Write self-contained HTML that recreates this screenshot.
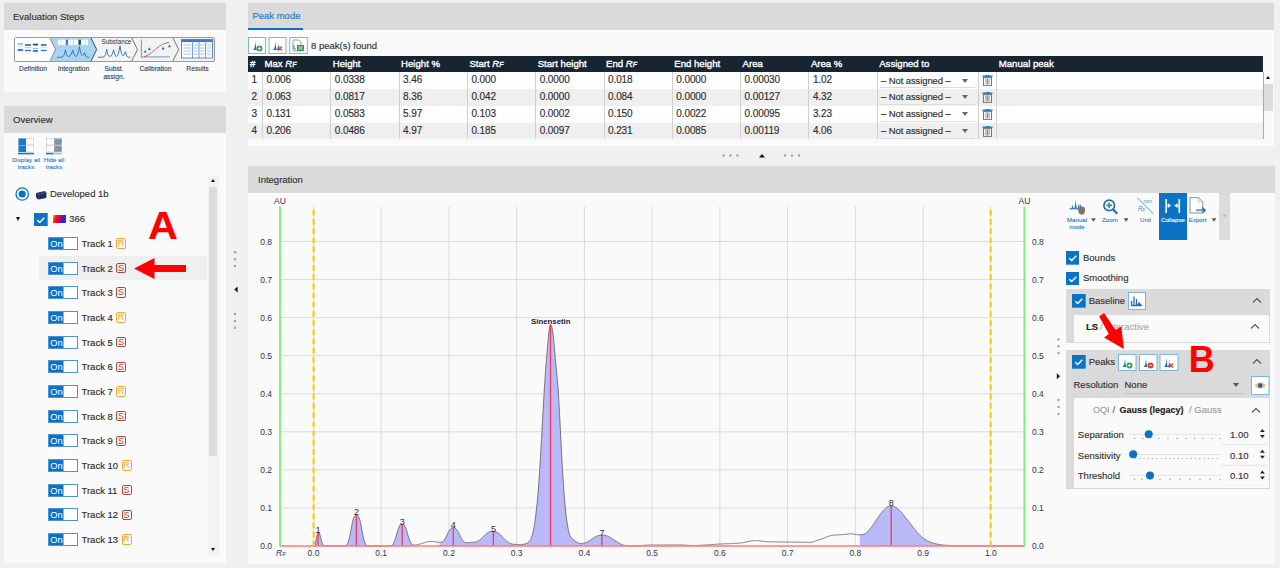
<!DOCTYPE html>
<html><head><meta charset="utf-8">
<style>
html,body{margin:0;padding:0}
body{width:1280px;height:568px;overflow:hidden;background:#f0f0f0;position:relative;font-family:"Liberation Sans",sans-serif;color:#333;-webkit-text-stroke:0.15px currentColor}
.a{position:absolute}
.panel{position:absolute;background:#fafafa}
.hdr{position:absolute;left:0;top:0;right:0;height:27px;background:#dadada}
.htxt{position:absolute;font-size:9.5px;line-height:12px;color:#333}
.t95{font-size:9.5px;white-space:nowrap}
.badge{position:absolute;width:8px;height:8.5px;border:1px solid;border-radius:2px;font-size:9px;line-height:9px;text-align:center;background:transparent;-webkit-text-stroke:0}
.th{font-size:9.6px;font-weight:normal;color:#fff;line-height:12px;white-space:nowrap;-webkit-text-stroke:0.35px #fff}
.td{font-size:10px;letter-spacing:-0.1px;color:#2e2e2e;line-height:12px;white-space:nowrap}
.lbl{font-size:6.7px;color:#3a4a60;white-space:nowrap;text-align:center;line-height:8.3px}
.tb{font-size:6.2px;color:#1c7acb;white-space:nowrap;text-align:center;line-height:7px;-webkit-text-stroke:0.1px currentColor}
svg text.ax{font-family:"Liberation Sans",sans-serif;font-size:8.5px;fill:#2e3452}
svg text.pl{font-family:"Liberation Sans",sans-serif;font-size:9px;fill:#2a2a3a}
</style></head><body>

<!-- ============ LEFT: Evaluation Steps ============ -->
<div class="panel" style="left:4px;top:3px;width:222px;height:88.5px">
  <div class="hdr"></div>
  <div class="htxt" style="left:9px;top:7.5px">Evaluation Steps</div>
</div>
<svg class="a" style="left:0;top:0" width="230" height="92" viewBox="0 0 230 92">
  <!-- outer -->
  <rect x="14.5" y="37.5" width="200" height="24" fill="#f3f3f3" stroke="#9a9a9a" stroke-width="1.1" rx="2"/>
  <path d="M15 38 H50 L55.5 49.5 L50 61 H15 Z" fill="#fff"/>
  <path d="M50 38 H91 L96.7 49.5 L91 61 H50 L55.5 49.5 Z" fill="#a9d3ef"/>
  <path d="M50 38 L55.5 49.5 L50 61" fill="none" stroke="#8c8c8c" stroke-width="1"/>
  <path d="M91 38 L96.7 49.5 L91 61" fill="none" stroke="#2d4e8e" stroke-width="1"/>
  <path d="M131.7 38 L137.5 49.5 L131.7 61" fill="none" stroke="#666" stroke-width="0.9"/>
  <path d="M172.9 38 L178.7 49.5 L172.9 61" fill="none" stroke="#666" stroke-width="0.9"/>
  <!-- definition icon -->
  <g>
    <path d="M17.7 43.9 H23.1" stroke="#7aa8b8" stroke-width="1.4"/>
    <path d="M25 45 H30.8 M40.9 45 H46.5" stroke="#1e5e80" stroke-width="1.3"/>
    <path d="M32.9 44.6 H38" stroke="#0d4a70" stroke-width="1.7"/>
    <path d="M17.7 46.4 H23.1 M40.9 47.4 H46.5" stroke="#a8c8f0" stroke-width="0.6"/>
    <path d="M25 47.4 H30.8" stroke="#999" stroke-width="0.6"/>
    <path d="M32.9 48.4 H38" stroke="#8ab8f8" stroke-width="1.2"/>
    <path d="M17.7 50.1 H23.1 M32.9 51 H38" stroke="#2f80f0" stroke-width="2"/>
    <path d="M25 50.5 H30.8 M40.9 50.5 H46.5" stroke="#2f80f0" stroke-width="1.3"/>
    <path d="M17.7 53.5 H23.1 M25 53.5 H30.8 M32.9 53.5 H38 M40.9 53.5 H46.5" stroke="#e6efe6" stroke-width="0.6"/>
  </g>
  <!-- integration icon -->
  <g>
    <rect x="58" y="39.7" width="30" height="5.2" fill="#fff"/>
    <rect x="60.3" y="39.7" width="2" height="5.2" fill="#e4eeee"/>
    <rect x="65.7" y="39.7" width="2.4" height="5.2" fill="#2a7ff0"/>
    <rect x="73.2" y="39.7" width="0.8" height="5.2" fill="#a8c8f0"/>
    <rect x="78.5" y="39.7" width="2.4" height="5.2" fill="#0d4a70"/>
    <rect x="84" y="39.7" width="2" height="5.2" fill="#e4eeee"/>
    <path d="M57 57.3 H61.5 Q64.2 57.3 65.4 49.8 Q66.5 56.5 68.5 56.5 Q71 56.5 72.8 50.1 Q74.2 56.5 76 56.5 Q78 56 79.5 46.4 Q80.8 55.5 82.5 55.5 Q83.7 55.5 84.6 52.5 Q85.5 57.3 87.5 57.3 H89.3" fill="none" stroke="#2a6db5" stroke-width="0.9"/>
  </g>
  <!-- substance -->
  <text x="101.6" y="43.9" font-family="Liberation Sans" font-size="6.3" fill="#333">Substance</text>
  <path d="M97.9 57.2 H103 Q105.5 57.2 106.7 49.3 Q107.8 56.5 109.8 56.5 Q112 56.5 113.6 49.8 Q114.8 56.5 116.5 56.5 Q118.5 56 120 45.8 Q121.3 55.5 123 55.5 Q124.5 55.5 125.4 51.7 Q126.3 57.2 128.5 57.2 H130.4" fill="none" stroke="#2a6db5" stroke-width="0.9"/>
  <!-- calibration -->
  <path d="M141.4 39.4 V57.7 M141 56.9 H169.9" stroke="#5a8fc8" stroke-width="0.9" fill="none"/>
  <path d="M144 57 Q150 55 156.6 48.3 Q162 43 169 42.3" stroke="#c8452e" stroke-width="0.8" fill="none"/>
  <path d="M143.6 52.6 l1.6 -2.6 l1.6 2.6 Z M147.8 49.9 l1.6 -2.6 l1.6 2.6 Z M161.6 49.4 l1.6 -2.6 l1.6 2.6 Z M167.8 47.2 l1.6 -2.6 l1.6 2.6 Z" fill="#2a6db5"/>
  <!-- results -->
  <rect x="181.5" y="39.5" width="31" height="18.5" fill="#fff" stroke="#4a86c8" stroke-width="0.9"/>
  <rect x="181.5" y="39.5" width="31" height="2.6" fill="#3a7cc8"/>
  <path d="M192.5 39.5 V58 M199 39.5 V58 M205.5 39.5 V58" stroke="#4a86c8" stroke-width="0.8"/>
  <path d="M183.5 45 H191 M183.5 48 H191 M183.5 51 H191 M183.5 54 H191 M193.5 45 H198 M193.5 48 H198 M193.5 51 H198 M193.5 54 H198 M200 45 H204.5 M200 48 H204.5 M200 51 H204.5 M200 54 H204.5 M206.5 45 H211 M206.5 48 H211 M206.5 51 H211 M206.5 54 H211" stroke="#7aa6d8" stroke-width="0.7"/>
</svg>
<div class="a lbl" style="left:13px;top:65px;width:40px">Definition</div>
<div class="a lbl" style="left:53px;top:65px;width:41px">Integration</div>
<div class="a lbl" style="left:94px;top:65px;width:40px">Subst.<br>assign.</div>
<div class="a lbl" style="left:135px;top:65px;width:41px">Calibration</div>
<div class="a lbl" style="left:177px;top:65px;width:41px">Results</div>

<!-- ============ LEFT: Overview ============ -->
<div class="panel" style="left:4px;top:105.5px;width:222px;height:457.5px">
  <div class="hdr"></div>
  <div class="htxt" style="left:9px;top:8px">Overview</div>
</div>
<svg class="a" style="left:18px;top:138px" width="16" height="17" viewBox="0 0 16 17">
  <rect x="0.5" y="0.5" width="15" height="6.5" fill="#fff" stroke="#ccc" stroke-width="0.7"/>
  <rect x="0.5" y="0.5" width="7.5" height="6.5" fill="#1b7acb"/>
  <rect x="0.5" y="7.5" width="15" height="6.5" fill="#fff" stroke="#ccc" stroke-width="0.7"/>
  <rect x="0.5" y="7.5" width="7.5" height="6.5" fill="#1b7acb"/>
  <rect x="0" y="14.8" width="16" height="1.6" fill="#1b7acb"/>
</svg>
<svg class="a" style="left:46px;top:138px" width="16" height="17" viewBox="0 0 16 17">
  <rect x="0.5" y="0.5" width="15" height="6.5" fill="#fff" stroke="#ccc" stroke-width="0.7"/>
  <rect x="8" y="0.5" width="7.5" height="6.5" fill="#9aa0a6"/>
  <rect x="0.5" y="7.5" width="15" height="6.5" fill="#fff" stroke="#ccc" stroke-width="0.7"/>
  <rect x="8" y="7.5" width="7.5" height="6.5" fill="#9aa0a6"/>
  <text x="9" y="6" font-family="Liberation Sans" font-size="5" fill="#2a7acb">Off</text>
  <text x="9" y="13" font-family="Liberation Sans" font-size="5" fill="#2a7acb">Off</text>
  <rect x="0" y="14.8" width="7" height="1.6" fill="#1b7acb"/>
  <rect x="7" y="14.8" width="9" height="1.6" fill="#bbb"/>
</svg>
<div class="a tb" style="left:6px;top:156px;width:40px">Display all<br>tracks</div>
<div class="a tb" style="left:34px;top:156px;width:40px">Hide all<br>tracks</div>

<!-- tree -->
<svg class="a" style="left:15px;top:187px" width="15" height="15" viewBox="0 0 15 15"><circle cx="7.2" cy="7" r="6.2" fill="#fff" stroke="#0b73c6" stroke-width="1.3"/><circle cx="7.2" cy="7" r="3.6" fill="#0b73c6"/></svg>
<svg class="a" style="left:34.5px;top:189.5px" width="12" height="10" viewBox="0 0 12 10"><path d="M1 3 L9.5 1 L11.5 2.5 L3 4.5 Z" fill="#2a3a5a"/><path d="M3 4.5 L11.5 2.5 L11.3 8 L3.5 9.5 Z" fill="#1a2c70"/><path d="M1 3 L3 4.5 L3.5 9.5 L1.3 8 Z" fill="#101828"/></svg>
<div class="a t95" style="left:50px;top:188px;line-height:12px;color:#333">Developed 1b</div>
<div class="a" style="left:15.5px;top:217px;width:0;height:0;border-left:2.6px solid transparent;border-right:2.6px solid transparent;border-top:4px solid #111"></div>
<div class="a" style="left:34px;top:212.5px"><svg style="display:block" width="13.7" height="13.7" viewBox="0 0 13 13"><rect width="13" height="13" fill="#0b73c6"/><path d="M3.2 6.8 L5.4 9 L9.8 4.6" stroke="#fff" stroke-width="1.4" fill="none"/></svg></div>
<div class="a" style="left:52.5px;top:215.2px;width:13.5px;height:7.5px;background:linear-gradient(110deg,#f6d000 0%,#ff2000 22%,#e00040 45%,#3018f0 75%,#1838e0 90%,#18a050 100%)"></div>
<div class="a t95" style="left:69.3px;top:213px;line-height:12px;color:#333">366</div>

<div class="a" style="left:39px;top:255.8px;width:168px;height:24.5px;background:#efefef"></div>
<div class="a" style="left:48px;top:235.8px;height:13px"><svg width="30" height="13" viewBox="0 0 30 13"><rect x="0.5" y="0.5" width="29" height="12" fill="#fff" stroke="#4f94d0"/><rect x="1" y="1" width="14.5" height="11" fill="#0b73c6"/><text x="2.3" y="10.3" font-family="Liberation Sans" font-size="9.3" fill="#fff">On</text></svg></div><div class="a t95" style="left:81.5px;top:237.9px;line-height:12px;color:#2e2e2e">Track 1</div><div class="a badge" style="left:116px;top:238.1px;border-color:#f3a73b;color:#f3a73b">R</div>
<div class="a" style="left:48px;top:260.5px;height:13px"><svg width="30" height="13" viewBox="0 0 30 13"><rect x="0.5" y="0.5" width="29" height="12" fill="#fff" stroke="#4f94d0"/><rect x="1" y="1" width="14.5" height="11" fill="#0b73c6"/><text x="2.3" y="10.3" font-family="Liberation Sans" font-size="9.3" fill="#fff">On</text></svg></div><div class="a t95" style="left:81.5px;top:262.6px;line-height:12px;color:#2e2e2e">Track 2</div><div class="a badge" style="left:116px;top:262.8px;border-color:#a9473f;color:#a9473f">S</div>
<div class="a" style="left:48px;top:285.1px;height:13px"><svg width="30" height="13" viewBox="0 0 30 13"><rect x="0.5" y="0.5" width="29" height="12" fill="#fff" stroke="#4f94d0"/><rect x="1" y="1" width="14.5" height="11" fill="#0b73c6"/><text x="2.3" y="10.3" font-family="Liberation Sans" font-size="9.3" fill="#fff">On</text></svg></div><div class="a t95" style="left:81.5px;top:287.2px;line-height:12px;color:#2e2e2e">Track 3</div><div class="a badge" style="left:116px;top:287.4px;border-color:#a9473f;color:#a9473f">S</div>
<div class="a" style="left:48px;top:309.8px;height:13px"><svg width="30" height="13" viewBox="0 0 30 13"><rect x="0.5" y="0.5" width="29" height="12" fill="#fff" stroke="#4f94d0"/><rect x="1" y="1" width="14.5" height="11" fill="#0b73c6"/><text x="2.3" y="10.3" font-family="Liberation Sans" font-size="9.3" fill="#fff">On</text></svg></div><div class="a t95" style="left:81.5px;top:311.9px;line-height:12px;color:#2e2e2e">Track 4</div><div class="a badge" style="left:116px;top:312.1px;border-color:#f3a73b;color:#f3a73b">R</div>
<div class="a" style="left:48px;top:334.5px;height:13px"><svg width="30" height="13" viewBox="0 0 30 13"><rect x="0.5" y="0.5" width="29" height="12" fill="#fff" stroke="#4f94d0"/><rect x="1" y="1" width="14.5" height="11" fill="#0b73c6"/><text x="2.3" y="10.3" font-family="Liberation Sans" font-size="9.3" fill="#fff">On</text></svg></div><div class="a t95" style="left:81.5px;top:336.6px;line-height:12px;color:#2e2e2e">Track 5</div><div class="a badge" style="left:116px;top:336.8px;border-color:#a9473f;color:#a9473f">S</div>
<div class="a" style="left:48px;top:359.2px;height:13px"><svg width="30" height="13" viewBox="0 0 30 13"><rect x="0.5" y="0.5" width="29" height="12" fill="#fff" stroke="#4f94d0"/><rect x="1" y="1" width="14.5" height="11" fill="#0b73c6"/><text x="2.3" y="10.3" font-family="Liberation Sans" font-size="9.3" fill="#fff">On</text></svg></div><div class="a t95" style="left:81.5px;top:361.3px;line-height:12px;color:#2e2e2e">Track 6</div><div class="a badge" style="left:116px;top:361.5px;border-color:#a9473f;color:#a9473f">S</div>
<div class="a" style="left:48px;top:383.8px;height:13px"><svg width="30" height="13" viewBox="0 0 30 13"><rect x="0.5" y="0.5" width="29" height="12" fill="#fff" stroke="#4f94d0"/><rect x="1" y="1" width="14.5" height="11" fill="#0b73c6"/><text x="2.3" y="10.3" font-family="Liberation Sans" font-size="9.3" fill="#fff">On</text></svg></div><div class="a t95" style="left:81.5px;top:385.9px;line-height:12px;color:#2e2e2e">Track 7</div><div class="a badge" style="left:116px;top:386.1px;border-color:#f3a73b;color:#f3a73b">R</div>
<div class="a" style="left:48px;top:408.5px;height:13px"><svg width="30" height="13" viewBox="0 0 30 13"><rect x="0.5" y="0.5" width="29" height="12" fill="#fff" stroke="#4f94d0"/><rect x="1" y="1" width="14.5" height="11" fill="#0b73c6"/><text x="2.3" y="10.3" font-family="Liberation Sans" font-size="9.3" fill="#fff">On</text></svg></div><div class="a t95" style="left:81.5px;top:410.6px;line-height:12px;color:#2e2e2e">Track 8</div><div class="a badge" style="left:116px;top:410.8px;border-color:#a9473f;color:#a9473f">S</div>
<div class="a" style="left:48px;top:433.2px;height:13px"><svg width="30" height="13" viewBox="0 0 30 13"><rect x="0.5" y="0.5" width="29" height="12" fill="#fff" stroke="#4f94d0"/><rect x="1" y="1" width="14.5" height="11" fill="#0b73c6"/><text x="2.3" y="10.3" font-family="Liberation Sans" font-size="9.3" fill="#fff">On</text></svg></div><div class="a t95" style="left:81.5px;top:435.3px;line-height:12px;color:#2e2e2e">Track 9</div><div class="a badge" style="left:116px;top:435.5px;border-color:#a9473f;color:#a9473f">S</div>
<div class="a" style="left:48px;top:457.8px;height:13px"><svg width="30" height="13" viewBox="0 0 30 13"><rect x="0.5" y="0.5" width="29" height="12" fill="#fff" stroke="#4f94d0"/><rect x="1" y="1" width="14.5" height="11" fill="#0b73c6"/><text x="2.3" y="10.3" font-family="Liberation Sans" font-size="9.3" fill="#fff">On</text></svg></div><div class="a t95" style="left:81.5px;top:459.9px;line-height:12px;color:#2e2e2e">Track 10</div><div class="a badge" style="left:121.5px;top:460.1px;border-color:#f3a73b;color:#f3a73b">R</div>
<div class="a" style="left:48px;top:482.5px;height:13px"><svg width="30" height="13" viewBox="0 0 30 13"><rect x="0.5" y="0.5" width="29" height="12" fill="#fff" stroke="#4f94d0"/><rect x="1" y="1" width="14.5" height="11" fill="#0b73c6"/><text x="2.3" y="10.3" font-family="Liberation Sans" font-size="9.3" fill="#fff">On</text></svg></div><div class="a t95" style="left:81.5px;top:484.6px;line-height:12px;color:#2e2e2e">Track 11</div><div class="a badge" style="left:121.5px;top:484.8px;border-color:#a9473f;color:#a9473f">S</div>
<div class="a" style="left:48px;top:507.2px;height:13px"><svg width="30" height="13" viewBox="0 0 30 13"><rect x="0.5" y="0.5" width="29" height="12" fill="#fff" stroke="#4f94d0"/><rect x="1" y="1" width="14.5" height="11" fill="#0b73c6"/><text x="2.3" y="10.3" font-family="Liberation Sans" font-size="9.3" fill="#fff">On</text></svg></div><div class="a t95" style="left:81.5px;top:509.3px;line-height:12px;color:#2e2e2e">Track 12</div><div class="a badge" style="left:121.5px;top:509.5px;border-color:#a9473f;color:#a9473f">S</div>
<div class="a" style="left:48px;top:531.8px;height:13px"><svg width="30" height="13" viewBox="0 0 30 13"><rect x="0.5" y="0.5" width="29" height="12" fill="#fff" stroke="#4f94d0"/><rect x="1" y="1" width="14.5" height="11" fill="#0b73c6"/><text x="2.3" y="10.3" font-family="Liberation Sans" font-size="9.3" fill="#fff">On</text></svg></div><div class="a t95" style="left:81.5px;top:533.9px;line-height:12px;color:#2e2e2e">Track 13</div><div class="a badge" style="left:121.5px;top:534.1px;border-color:#f3a73b;color:#f3a73b">R</div>

<!-- scrollbar left -->
<div class="a" style="left:207.5px;top:175.5px;width:11px;height:379px;background:#f3f3f3"></div>
<div class="a" style="left:208.5px;top:187px;width:8.6px;height:268.5px;background:#dcdcdc"></div>
<div class="a" style="left:210.6px;top:179px;width:0;height:0;border-left:2.3px solid transparent;border-right:2.3px solid transparent;border-bottom:3.5px solid #111"></div>
<div class="a" style="left:210.6px;top:547.5px;width:0;height:0;border-left:2.3px solid transparent;border-right:2.3px solid transparent;border-top:3.5px solid #111"></div>

<!-- A label and arrow -->
<div class="a" style="left:147.5px;top:199.5px;font-size:38.8px;font-weight:bold;color:#ff0000;line-height:52px;transform:scaleX(1.065);transform-origin:0 0">A</div>
<svg class="a" style="left:130px;top:255px" width="60" height="27" viewBox="0 0 60 27"><path d="M4 13.5 L24.5 3 V10 H56 V17 H24.5 V24 Z" fill="#ff0000"/></svg>

<!-- splitter left -->
<svg class="a" style="left:226px;top:240px" width="22" height="100" viewBox="0 0 22 100">
  <g fill="#a4a4a4"><circle cx="9" cy="12.3" r="1.25"/><circle cx="9" cy="19.2" r="1.25"/><circle cx="9" cy="26" r="1.25"/><circle cx="9" cy="74" r="1.25"/><circle cx="9" cy="81" r="1.25"/><circle cx="9" cy="87.7" r="1.25"/></g>
  <path d="M8.3 49.6 L11.6 46.6 V52.6 Z" fill="#111"/>
</svg>

<!-- ============ RIGHT: Peak mode ============ -->
<div class="panel" style="left:248px;top:3px;width:1026px;height:143.3px">
  <div class="hdr"></div>
  <div class="a" style="left:0;top:24.7px;width:54.5px;height:2.3px;background:#0a72c4"></div>
  <div class="htxt" style="left:4.4px;top:7px;color:#1e7bc8">Peak mode</div>
</div>
<!-- toolbar buttons -->
<svg class="a" style="left:248px;top:37px" width="60" height="17" viewBox="0 0 60 17">
  <rect x="0.5" y="0.5" width="17" height="16" fill="#fff" stroke="#7fb3e0"/>
  <rect x="21" y="0.5" width="17" height="16" fill="#fff" stroke="#7fb3e0"/>
  <rect x="41.7" y="0.5" width="17.6" height="16" fill="#fff" stroke="#7fb3e0"/>
  <path d="M5 13 Q7 12 7.5 4 Q8 12 9 13 Z" fill="#2a6db5"/>
  <circle cx="11.5" cy="11.5" r="3" fill="#3aa060"/><path d="M10 11.5 H13 M11.5 10 V13" stroke="#fff" stroke-width="0.9"/>
  <path d="M25 13 Q27 12 27.5 4 Q28 12 29 13 Z M28.5 13 Q30 12 30.3 6 Q30.7 12 32 13 Z" fill="#2a6db5"/>
  <path d="M30 9.5 L34 13.5 M34 9.5 L30 13.5" stroke="#e0402a" stroke-width="1.3"/>
  <path d="M45 3 H51 L53 5 V14 H45 Z" fill="#fff" stroke="#888" stroke-width="0.8"/>
  <rect x="49" y="8" width="7" height="6" fill="#2f9e52"/>
  <path d="M50.5 9 L54.5 13 M54.5 9 L50.5 13" stroke="#fff" stroke-width="0.9"/>
  <path d="M46 8 V12 H48" stroke="#2a6db5" stroke-width="0.8" fill="none"/>
</svg>
<div class="a t95" style="left:311px;top:39.5px;line-height:12px;color:#333">8 peak(s) found</div>

<!-- table -->
<div class="a" style="left:248px;top:56px;width:1015px;height:16px;background:#172533"></div>
<div class="a th" style="left:250px;top:57.5px">#</div>
<div class="a th" style="left:264.5px;top:57.5px">Max <i>R</i><span style="font-size:7px;font-style:italic">F</span></div>
<div class="a th" style="left:332.8px;top:57.5px">Height</div>
<div class="a th" style="left:401.1px;top:57.5px">Height %</div>
<div class="a th" style="left:469.4px;top:57.5px">Start <i>R</i><span style="font-size:7px;font-style:italic">F</span></div>
<div class="a th" style="left:537.7px;top:57.5px">Start height</div>
<div class="a th" style="left:606.0px;top:57.5px">End <i>R</i><span style="font-size:7px;font-style:italic">F</span></div>
<div class="a th" style="left:674.3px;top:57.5px">End height</div>
<div class="a th" style="left:742.6px;top:57.5px">Area</div>
<div class="a th" style="left:810.9px;top:57.5px">Area %</div>
<div class="a th" style="left:879.2px;top:57.5px">Assigned to</div>
<div class="a th" style="left:998.8px;top:57.5px">Manual peak</div>
<div class="a" style="left:248px;top:72.00px;width:1015px;height:16.9px;background:#fefefe"></div>
<div class="a td" style="left:251.5px;top:74.30px">1</div>
<div class="a td" style="left:266.5px;top:74.30px">0.006</div>
<div class="a td" style="left:334.8px;top:74.30px">0.0338</div>
<div class="a td" style="left:403.1px;top:74.30px">3.46</div>
<div class="a td" style="left:471.4px;top:74.30px">0.000</div>
<div class="a td" style="left:539.7px;top:74.30px">0.0000</div>
<div class="a td" style="left:608.0px;top:74.30px">0.018</div>
<div class="a td" style="left:676.3px;top:74.30px">0.0000</div>
<div class="a td" style="left:744.6px;top:74.30px">0.00030</div>
<div class="a td" style="left:812.9px;top:74.30px">1.02</div>
<div class="a td" style="left:881px;top:74.60px;font-size:9.5px">– Not assigned –</div>
<div class="a" style="left:961.5px;top:78.50px;width:0;height:0;border-left:3px solid transparent;border-right:3px solid transparent;border-top:4px solid #666"></div>
<div class="a" style="left:880px;top:87.20px;width:95px;height:1px;background:#dcdcdc"></div>
<svg class="a" style="left:982px;top:75.00px" width="11" height="11" viewBox="0 0 11 11"><rect x="0.5" y="0.5" width="10" height="1.6" fill="#2f7cc4"/><rect x="3.5" y="0" width="4" height="1" fill="#2f7cc4"/><rect x="1.5" y="2.6" width="8" height="8" fill="none" stroke="#777" stroke-width="1"/><path d="M4 3.5 V9.5 M5.5 3.5 V9.5 M7 3.5 V9.5" stroke="#777" stroke-width="0.8"/></svg>
<div class="a" style="left:248px;top:88.85px;width:1015px;height:16.9px;background:#efefef"></div>
<div class="a td" style="left:251.5px;top:91.15px">2</div>
<div class="a td" style="left:266.5px;top:91.15px">0.063</div>
<div class="a td" style="left:334.8px;top:91.15px">0.0817</div>
<div class="a td" style="left:403.1px;top:91.15px">8.36</div>
<div class="a td" style="left:471.4px;top:91.15px">0.042</div>
<div class="a td" style="left:539.7px;top:91.15px">0.0000</div>
<div class="a td" style="left:608.0px;top:91.15px">0.084</div>
<div class="a td" style="left:676.3px;top:91.15px">0.0000</div>
<div class="a td" style="left:744.6px;top:91.15px">0.00127</div>
<div class="a td" style="left:812.9px;top:91.15px">4.32</div>
<div class="a td" style="left:881px;top:91.45px;font-size:9.5px">– Not assigned –</div>
<div class="a" style="left:961.5px;top:95.35px;width:0;height:0;border-left:3px solid transparent;border-right:3px solid transparent;border-top:4px solid #666"></div>
<div class="a" style="left:880px;top:104.05px;width:95px;height:1px;background:#dcdcdc"></div>
<svg class="a" style="left:982px;top:91.85px" width="11" height="11" viewBox="0 0 11 11"><rect x="0.5" y="0.5" width="10" height="1.6" fill="#2f7cc4"/><rect x="3.5" y="0" width="4" height="1" fill="#2f7cc4"/><rect x="1.5" y="2.6" width="8" height="8" fill="none" stroke="#777" stroke-width="1"/><path d="M4 3.5 V9.5 M5.5 3.5 V9.5 M7 3.5 V9.5" stroke="#777" stroke-width="0.8"/></svg>
<div class="a" style="left:248px;top:105.70px;width:1015px;height:16.9px;background:#fefefe"></div>
<div class="a td" style="left:251.5px;top:108.00px">3</div>
<div class="a td" style="left:266.5px;top:108.00px">0.131</div>
<div class="a td" style="left:334.8px;top:108.00px">0.0583</div>
<div class="a td" style="left:403.1px;top:108.00px">5.97</div>
<div class="a td" style="left:471.4px;top:108.00px">0.103</div>
<div class="a td" style="left:539.7px;top:108.00px">0.0002</div>
<div class="a td" style="left:608.0px;top:108.00px">0.150</div>
<div class="a td" style="left:676.3px;top:108.00px">0.0022</div>
<div class="a td" style="left:744.6px;top:108.00px">0.00095</div>
<div class="a td" style="left:812.9px;top:108.00px">3.23</div>
<div class="a td" style="left:881px;top:108.30px;font-size:9.5px">– Not assigned –</div>
<div class="a" style="left:961.5px;top:112.20px;width:0;height:0;border-left:3px solid transparent;border-right:3px solid transparent;border-top:4px solid #666"></div>
<div class="a" style="left:880px;top:120.90px;width:95px;height:1px;background:#dcdcdc"></div>
<svg class="a" style="left:982px;top:108.70px" width="11" height="11" viewBox="0 0 11 11"><rect x="0.5" y="0.5" width="10" height="1.6" fill="#2f7cc4"/><rect x="3.5" y="0" width="4" height="1" fill="#2f7cc4"/><rect x="1.5" y="2.6" width="8" height="8" fill="none" stroke="#777" stroke-width="1"/><path d="M4 3.5 V9.5 M5.5 3.5 V9.5 M7 3.5 V9.5" stroke="#777" stroke-width="0.8"/></svg>
<div class="a" style="left:248px;top:122.55px;width:1015px;height:16.9px;background:#efefef"></div>
<div class="a td" style="left:251.5px;top:124.85px">4</div>
<div class="a td" style="left:266.5px;top:124.85px">0.206</div>
<div class="a td" style="left:334.8px;top:124.85px">0.0486</div>
<div class="a td" style="left:403.1px;top:124.85px">4.97</div>
<div class="a td" style="left:471.4px;top:124.85px">0.185</div>
<div class="a td" style="left:539.7px;top:124.85px">0.0097</div>
<div class="a td" style="left:608.0px;top:124.85px">0.231</div>
<div class="a td" style="left:676.3px;top:124.85px">0.0085</div>
<div class="a td" style="left:744.6px;top:124.85px">0.00119</div>
<div class="a td" style="left:812.9px;top:124.85px">4.06</div>
<div class="a td" style="left:881px;top:125.15px;font-size:9.5px">– Not assigned –</div>
<div class="a" style="left:961.5px;top:129.05px;width:0;height:0;border-left:3px solid transparent;border-right:3px solid transparent;border-top:4px solid #666"></div>
<div class="a" style="left:880px;top:137.75px;width:95px;height:1px;background:#dcdcdc"></div>
<svg class="a" style="left:982px;top:125.55px" width="11" height="11" viewBox="0 0 11 11"><rect x="0.5" y="0.5" width="10" height="1.6" fill="#2f7cc4"/><rect x="3.5" y="0" width="4" height="1" fill="#2f7cc4"/><rect x="1.5" y="2.6" width="8" height="8" fill="none" stroke="#777" stroke-width="1"/><path d="M4 3.5 V9.5 M5.5 3.5 V9.5 M7 3.5 V9.5" stroke="#777" stroke-width="0.8"/></svg>
<div class="a" style="left:262.0px;top:72px;width:1px;height:67.4px;background:#d0d0d0"></div>
<div class="a" style="left:330.3px;top:72px;width:1px;height:67.4px;background:#d0d0d0"></div>
<div class="a" style="left:398.6px;top:72px;width:1px;height:67.4px;background:#d0d0d0"></div>
<div class="a" style="left:466.9px;top:72px;width:1px;height:67.4px;background:#d0d0d0"></div>
<div class="a" style="left:535.2px;top:72px;width:1px;height:67.4px;background:#d0d0d0"></div>
<div class="a" style="left:603.5px;top:72px;width:1px;height:67.4px;background:#d0d0d0"></div>
<div class="a" style="left:671.8px;top:72px;width:1px;height:67.4px;background:#d0d0d0"></div>
<div class="a" style="left:740.1px;top:72px;width:1px;height:67.4px;background:#d0d0d0"></div>
<div class="a" style="left:808.4px;top:72px;width:1px;height:67.4px;background:#d0d0d0"></div>
<div class="a" style="left:876.7px;top:72px;width:1px;height:67.4px;background:#d0d0d0"></div>
<div class="a" style="left:977.5px;top:72px;width:1px;height:67.4px;background:#d0d0d0"></div>
<div class="a" style="left:996.3px;top:72px;width:1px;height:67.4px;background:#d0d0d0"></div>
<div class="a" style="left:1262.5px;top:72px;width:1px;height:67.4px;background:#aaa"></div>
<!-- table scrollbar -->
<div class="a" style="left:1264px;top:83.5px;width:9px;height:27px;background:#dcdcdc"></div>
<div class="a" style="left:1266px;top:76px;width:0;height:0;border-left:2.3px solid transparent;border-right:2.3px solid transparent;border-bottom:3.5px solid #111"></div>

<!-- splitter middle -->
<svg class="a" style="left:700px;top:146px" width="120" height="20" viewBox="0 0 120 20">
  <g fill="#a4a4a4"><circle cx="23.6" cy="9.6" r="1.25"/><circle cx="30.5" cy="9.6" r="1.25"/><circle cx="37.4" cy="9.6" r="1.25"/><circle cx="85" cy="9.6" r="1.25"/><circle cx="92" cy="9.6" r="1.25"/><circle cx="99" cy="9.6" r="1.25"/></g>
  <path d="M59 11.4 L62 8 L65 11.4 Z" fill="#111"/>
</svg>

<!-- ============ RIGHT: Integration ============ -->
<div class="panel" style="left:248px;top:166px;width:1026.5px;height:398px">
  <div class="hdr" style="height:26.5px"></div>
  <div class="htxt" style="left:10px;top:7.5px">Integration</div>
</div>

<svg class="a" style="left:0;top:0" width="1060" height="568" viewBox="0 0 1060 568">
<line x1="313.5" y1="206.5" x2="313.5" y2="546" stroke="#d3dce6" stroke-width="1"/>
<line x1="381.2" y1="206.5" x2="381.2" y2="546" stroke="#d3dce6" stroke-width="1"/>
<line x1="449.0" y1="206.5" x2="449.0" y2="546" stroke="#d3dce6" stroke-width="1"/>
<line x1="516.7" y1="206.5" x2="516.7" y2="546" stroke="#d3dce6" stroke-width="1"/>
<line x1="584.4" y1="206.5" x2="584.4" y2="546" stroke="#d3dce6" stroke-width="1"/>
<line x1="652.2" y1="206.5" x2="652.2" y2="546" stroke="#d3dce6" stroke-width="1"/>
<line x1="719.9" y1="206.5" x2="719.9" y2="546" stroke="#d3dce6" stroke-width="1"/>
<line x1="787.6" y1="206.5" x2="787.6" y2="546" stroke="#d3dce6" stroke-width="1"/>
<line x1="855.3" y1="206.5" x2="855.3" y2="546" stroke="#d3dce6" stroke-width="1"/>
<line x1="923.1" y1="206.5" x2="923.1" y2="546" stroke="#d3dce6" stroke-width="1"/>
<line x1="990.8" y1="206.5" x2="990.8" y2="546" stroke="#d3dce6" stroke-width="1"/>
<line x1="280" y1="507.9" x2="1024" y2="507.9" stroke="#d3dce6" stroke-width="1"/>
<line x1="280" y1="469.9" x2="1024" y2="469.9" stroke="#d3dce6" stroke-width="1"/>
<line x1="280" y1="431.8" x2="1024" y2="431.8" stroke="#d3dce6" stroke-width="1"/>
<line x1="280" y1="393.8" x2="1024" y2="393.8" stroke="#d3dce6" stroke-width="1"/>
<line x1="280" y1="355.7" x2="1024" y2="355.7" stroke="#d3dce6" stroke-width="1"/>
<line x1="280" y1="317.6" x2="1024" y2="317.6" stroke="#d3dce6" stroke-width="1"/>
<line x1="280" y1="279.6" x2="1024" y2="279.6" stroke="#d3dce6" stroke-width="1"/>
<line x1="280" y1="241.5" x2="1024" y2="241.5" stroke="#d3dce6" stroke-width="1"/>
<path d="M314.4,546.00 L314.9,545.63 L315.4,543.32 L315.9,540.58 L316.4,537.97 L316.9,535.76 L317.4,534.20 L317.9,533.31 L318.4,532.85 L318.9,532.76 L319.4,533.34 L319.9,534.66 L320.4,536.55 L320.9,538.67 L321.4,540.68 L321.9,542.37 L322.4,543.64 L322.9,544.56 L323.4,545.22 L323.9,545.68 L324.4,545.95 L324.6,545.99 L324.6,546.0 L314.4,546.0 Z" fill="#b9b9f7"/>
<path d="M344.4,546.00 L344.9,545.98 L345.4,545.86 L345.9,545.65 L346.4,545.32 L346.9,544.81 L347.4,544.08 L347.9,543.07 L348.4,541.74 L348.9,540.06 L349.4,538.05 L349.9,535.74 L350.4,533.19 L350.9,530.50 L351.4,527.78 L351.9,525.15 L352.4,522.71 L352.9,520.56 L353.4,518.76 L353.9,517.35 L354.4,516.33 L354.9,515.65 L355.4,515.28 L355.9,515.13 L356.4,515.10 L356.9,515.11 L357.4,515.23 L357.9,515.56 L358.4,516.17 L358.9,517.13 L359.4,518.46 L359.9,520.19 L360.4,522.27 L360.9,524.66 L361.4,527.25 L361.9,529.96 L362.4,532.65 L362.9,535.23 L363.4,537.59 L363.9,539.66 L364.4,541.41 L364.9,542.81 L365.4,543.90 L365.9,544.70 L366.4,545.27 L366.9,545.65 L367.4,545.89 L367.9,546.00 L368.2,546.00 L368.2,546.0 L344.4,546.0 Z" fill="#b9b9f7"/>
<path d="M391.0,545.76 L391.5,545.54 L392.0,545.21 L392.5,544.75 L393.0,544.13 L393.5,543.34 L394.0,542.35 L394.5,541.15 L395.0,539.76 L395.5,538.20 L396.0,536.51 L396.5,534.74 L397.0,532.97 L397.5,531.24 L398.0,529.63 L398.5,528.19 L399.0,526.96 L399.5,525.96 L400.0,525.21 L400.5,524.69 L401.0,524.37 L401.5,524.23 L402.0,524.20 L402.5,524.21 L403.0,524.29 L403.5,524.50 L404.0,524.89 L404.5,525.50 L405.0,526.34 L405.5,527.43 L406.0,528.74 L406.5,530.25 L407.0,531.91 L407.5,533.67 L408.0,535.45 L408.5,537.11 L409.0,538.58 L409.5,539.90 L410.0,541.10 L410.5,542.16 L411.0,543.03 L411.5,543.71 L412.0,544.21 L412.5,544.58 L413.0,544.83 L413.5,544.98 L413.8,545.04 L413.8,546.0 L391.0,546.0 Z" fill="#b9b9f7"/>
<path d="M439.4,542.30 L439.9,542.30 L440.4,542.29 L440.9,542.24 L441.4,542.15 L441.9,541.99 L442.4,541.76 L442.9,541.43 L443.4,541.00 L443.9,540.47 L444.4,539.83 L444.9,539.09 L445.4,538.24 L445.9,537.31 L446.4,536.30 L446.9,535.22 L447.4,534.12 L447.9,533.06 L448.4,532.05 L448.9,531.13 L449.4,530.30 L449.9,529.59 L450.4,528.99 L450.9,528.52 L451.4,528.16 L451.9,527.92 L452.4,527.77 L452.9,527.71 L453.4,527.70 L453.9,527.72 L454.4,527.81 L454.9,527.98 L455.4,528.26 L455.9,528.65 L456.4,529.15 L456.9,529.78 L457.4,530.52 L457.9,531.36 L458.4,532.29 L458.9,533.30 L459.4,534.35 L459.9,535.43 L460.4,536.49 L460.9,537.50 L461.4,538.44 L461.9,539.31 L462.4,540.08 L462.9,540.75 L463.4,541.32 L463.9,541.79 L464.4,542.15 L464.9,542.43 L465.4,542.62 L465.9,542.73 L466.4,542.79 L466.9,542.80 L467.4,542.78 L467.9,542.73 L468.4,542.67 L468.9,542.61 L469.4,542.55 L469.9,542.51 L470.4,542.47 L470.9,542.44 L471.4,542.41 L471.9,542.39 L472.4,542.36 L472.9,542.32 L473.4,542.28 L473.9,542.22 L474.4,542.16 L474.9,542.07 L475.4,541.97 L475.9,541.84 L476.4,541.69 L476.9,541.52 L477.4,541.31 L477.9,541.07 L478.4,540.81 L478.9,540.50 L479.4,540.17 L479.9,539.80 L480.4,539.40 L480.9,538.97 L481.4,538.51 L481.9,538.04 L482.4,537.55 L482.9,537.06 L483.4,536.56 L483.9,536.07 L484.4,535.59 L484.9,535.11 L485.4,534.65 L485.9,534.21 L486.4,533.80 L486.9,533.41 L487.4,533.05 L487.9,532.72 L488.4,532.43 L488.9,532.17 L489.4,531.94 L489.9,531.76 L490.4,531.61 L490.9,531.50 L491.4,531.42 L491.9,531.38 L492.4,531.36 L492.9,531.37 L493.4,531.40 L493.9,531.44 L494.4,531.51 L494.9,531.60 L495.4,531.72 L495.9,531.88 L496.4,532.07 L496.9,532.29 L497.4,532.56 L497.9,532.86 L498.4,533.19 L498.9,533.56 L499.4,533.96 L499.9,534.40 L500.4,534.86 L500.9,535.34 L501.4,535.84 L501.9,536.36 L502.4,536.89 L502.9,537.43 L503.4,537.98 L503.9,538.51 L504.4,539.04 L504.9,539.55 L505.4,540.04 L505.9,540.51 L506.4,540.95 L506.9,541.37 L507.4,541.76 L507.9,542.12 L508.4,542.45 L508.9,542.75 L509.4,543.02 L509.9,543.26 L510.4,543.48 L510.9,543.66 L511.4,543.82 L511.9,543.96 L512.4,544.07 L512.9,544.16 L513.4,544.24 L513.9,544.30 L514.4,544.35 L514.9,544.39 L515.4,544.42 L515.9,544.45 L516.4,544.48 L516.9,544.51 L517.4,544.53 L517.9,544.54 L518.4,544.55 L518.9,544.54 L519.4,544.54 L519.9,544.53 L520.4,544.51 L520.9,544.49 L521.4,544.46 L521.9,544.43 L522.4,544.39 L522.9,544.34 L523.4,544.28 L523.9,544.21 L524.4,544.13 L524.9,544.02 L525.4,543.88 L525.9,543.72 L526.4,543.51 L526.9,543.26 L527.4,542.96 L527.9,542.62 L528.4,542.23 L528.9,541.77 L529.4,541.22 L529.9,540.54 L530.4,539.73 L530.9,538.74 L531.4,537.55 L531.9,536.14 L532.4,534.45 L532.9,532.48 L533.4,530.27 L533.9,527.79 L534.4,525.00 L534.9,521.85 L535.4,518.31 L535.9,514.34 L536.4,509.91 L536.9,505.04 L537.4,499.90 L537.9,494.40 L538.4,488.42 L538.9,481.88 L539.4,474.67 L539.9,466.76 L540.4,458.44 L540.9,449.84 L541.4,441.02 L541.9,432.07 L542.4,423.06 L542.9,414.08 L543.4,405.22 L543.9,396.57 L544.4,388.24 L544.9,380.31 L545.4,372.87 L545.9,365.98 L546.4,359.72 L546.9,354.12 L547.4,348.47 L547.9,342.72 L548.4,337.24 L548.9,332.38 L549.4,328.45 L549.9,325.78 L550.4,324.63 L550.9,324.80 L551.4,325.71 L551.9,327.43 L552.4,329.96 L552.9,333.31 L553.4,337.43 L553.9,342.29 L554.4,347.81 L554.9,353.92 L555.4,360.04 L555.9,365.34 L556.4,370.21 L556.9,375.04 L557.4,380.23 L557.9,386.17 L558.4,393.25 L558.9,401.84 L559.4,411.30 L559.9,421.09 L560.4,431.01 L560.9,440.86 L561.4,450.48 L561.9,459.70 L562.4,468.35 L562.9,476.43 L563.4,484.09 L563.9,491.27 L564.4,497.86 L564.9,503.78 L565.4,508.98 L565.9,513.61 L566.4,517.76 L566.9,521.46 L567.4,524.73 L567.9,527.59 L568.4,530.07 L568.9,532.19 L569.4,533.97 L569.9,535.41 L570.4,536.55 L570.9,537.44 L571.4,538.12 L571.9,538.64 L572.4,539.05 L572.9,539.39 L573.4,539.71 L573.9,540.03 L574.4,540.37 L574.9,540.73 L575.4,541.10 L575.9,541.47 L576.4,541.84 L576.9,542.19 L577.4,542.52 L577.9,542.82 L578.4,543.08 L578.9,543.27 L579.4,543.40 L579.9,543.48 L580.4,543.53 L580.9,543.56 L581.4,543.56 L581.9,543.54 L582.4,543.50 L582.9,543.43 L583.4,543.34 L583.9,543.23 L584.4,543.09 L584.9,542.93 L585.4,542.76 L585.9,542.57 L586.4,542.35 L586.9,542.12 L587.4,541.87 L587.9,541.61 L588.4,541.32 L588.9,541.03 L589.4,540.72 L589.9,540.39 L590.4,540.06 L590.9,539.72 L591.4,539.38 L591.9,539.03 L592.4,538.69 L592.9,538.34 L593.4,538.00 L593.9,537.67 L594.4,537.35 L594.9,537.05 L595.4,536.77 L595.9,536.52 L596.4,536.28 L596.9,536.07 L597.4,535.88 L597.9,535.71 L598.4,535.57 L598.9,535.46 L599.4,535.37 L599.9,535.30 L600.4,535.25 L600.9,535.22 L601.4,535.20 L601.9,535.20 L602.4,535.20 L602.9,535.21 L603.4,535.22 L603.9,535.25 L604.4,535.30 L604.9,535.36 L605.4,535.45 L605.9,535.56 L606.4,535.69 L606.9,535.84 L607.4,536.02 L607.9,536.22 L608.4,536.45 L608.9,536.70 L609.4,536.97 L609.9,537.26 L610.4,537.56 L610.9,537.88 L611.4,538.20 L611.9,538.53 L612.4,538.86 L612.9,539.20 L613.4,539.53 L613.9,539.86 L614.4,540.19 L614.9,540.52 L615.4,540.85 L615.9,541.17 L616.4,541.49 L616.9,541.80 L617.4,542.11 L617.9,542.42 L618.4,542.73 L618.9,543.04 L619.4,543.33 L619.9,543.62 L620.4,543.89 L620.9,544.14 L621.4,544.38 L621.9,544.59 L622.4,544.78 L622.5,544.82 L622.5,546.0 L439.4,546.0 Z" fill="#b9b9f7"/>
<path d="M859.8,534.77 L860.3,534.72 L860.8,534.64 L861.3,534.59 L861.8,534.54 L862.3,534.50 L862.8,534.44 L863.3,534.37 L863.8,534.26 L864.3,534.12 L864.8,533.93 L865.3,533.69 L865.8,533.37 L866.3,532.99 L866.8,532.54 L867.3,532.06 L867.8,531.55 L868.3,531.02 L868.8,530.46 L869.3,529.88 L869.8,529.28 L870.3,528.65 L870.8,528.01 L871.3,527.34 L871.8,526.66 L872.3,525.97 L872.8,525.26 L873.3,524.53 L873.8,523.80 L874.3,523.06 L874.8,522.31 L875.3,521.56 L875.8,520.81 L876.3,520.05 L876.8,519.30 L877.3,518.55 L877.8,517.81 L878.3,517.08 L878.8,516.35 L879.3,515.64 L879.8,514.94 L880.3,514.25 L880.8,513.58 L881.3,512.93 L881.8,512.30 L882.3,511.69 L882.8,511.10 L883.3,510.54 L883.8,510.00 L884.3,509.49 L884.8,509.02 L885.3,508.57 L885.8,508.16 L886.3,507.77 L886.8,507.43 L887.3,507.12 L887.8,506.84 L888.3,506.61 L888.8,506.41 L889.3,506.25 L889.8,506.13 L890.3,506.05 L890.8,506.01 L891.3,506.00 L891.8,506.03 L892.3,506.10 L892.8,506.19 L893.3,506.32 L893.8,506.48 L894.3,506.67 L894.8,506.89 L895.3,507.15 L895.8,507.43 L896.3,507.74 L896.8,508.08 L897.3,508.44 L897.8,508.84 L898.3,509.26 L898.8,509.70 L899.3,510.17 L899.8,510.66 L900.3,511.17 L900.8,511.70 L901.3,512.25 L901.8,512.82 L902.3,513.41 L902.8,514.01 L903.3,514.62 L903.8,515.25 L904.3,515.88 L904.8,516.52 L905.3,517.16 L905.8,517.79 L906.3,518.44 L906.8,519.08 L907.3,519.72 L907.8,520.37 L908.3,521.01 L908.8,521.66 L909.3,522.31 L909.8,522.95 L910.3,523.60 L910.8,524.25 L911.3,524.91 L911.8,525.56 L912.3,526.21 L912.8,526.87 L913.3,527.52 L913.8,528.17 L914.3,528.81 L914.8,529.44 L915.3,530.06 L915.8,530.67 L916.3,531.27 L916.8,531.86 L917.3,532.43 L917.8,532.99 L918.3,533.54 L918.8,534.07 L919.3,534.59 L919.8,535.09 L920.3,535.58 L920.8,536.06 L921.3,536.52 L921.8,536.96 L922.3,537.38 L922.8,537.79 L923.3,538.18 L923.8,538.55 L924.3,538.91 L924.8,539.24 L925.3,539.56 L925.8,539.87 L926.3,540.16 L926.8,540.43 L927.3,540.70 L927.8,540.95 L928.3,541.18 L928.8,541.41 L929.3,541.62 L929.8,541.83 L930.3,542.03 L930.8,542.21 L931.3,542.39 L931.8,542.57 L932.3,542.74 L932.8,542.90 L933.3,543.06 L933.8,543.21 L934.3,543.35 L934.8,543.49 L935.3,543.63 L935.8,543.76 L936.3,543.88 L936.8,543.99 L937.3,544.11 L937.8,544.21 L938.3,544.31 L938.8,544.41 L939.3,544.50 L939.8,544.59 L940.3,544.67 L940.8,544.75 L941.3,544.82 L941.8,544.89 L942.3,544.96 L942.8,545.02 L943.3,545.07 L943.8,545.12 L944.3,545.17 L944.8,545.21 L945.3,545.25 L945.8,545.29 L946.3,545.32 L946.8,545.35 L947.3,545.37 L947.8,545.40 L948.3,545.42 L948.8,545.44 L949.3,545.46 L949.8,545.48 L950.0,545.48 L950.0,546.0 L859.8,546.0 Z" fill="#b9b9f7"/>
<path d="M313.5,546.00 L314.0,546.00 L314.5,546.00 L315.0,545.23 L315.5,542.78 L316.0,540.03 L316.5,537.48 L317.0,535.39 L317.5,533.97 L318.0,533.20 L318.5,532.79 L319.0,532.82 L319.5,533.55 L320.0,535.01 L320.5,536.97 L321.0,539.09 L321.5,541.05 L322.0,542.66 L322.5,543.85 L323.0,544.71 L323.5,545.33 L324.0,545.75 L324.5,545.97 L325.0,546.00 L325.5,546.00 L326.0,546.00 L326.5,546.00 L327.0,546.00 L327.5,546.00 L328.0,546.00 L328.5,546.00 L329.0,546.00 L329.5,546.00 L330.0,546.00 L330.5,546.00 L331.0,546.00 L331.5,546.00 L332.0,546.00 L332.5,546.00 L333.0,546.00 L333.5,546.00 L334.0,546.00 L334.5,546.00 L335.0,546.00 L335.5,546.00 L336.0,546.00 L336.5,546.00 L337.0,546.00 L337.5,546.00 L338.0,546.00 L338.5,546.00 L339.0,546.00 L339.5,546.00 L340.0,546.00 L340.5,546.00 L341.0,546.00 L341.5,546.00 L342.0,546.00 L342.5,546.00 L343.0,546.00 L343.5,546.00 L344.0,546.00 L344.5,546.00 L345.0,545.96 L345.5,545.83 L346.0,545.60 L346.5,545.23 L347.0,544.68 L347.5,543.90 L348.0,542.83 L348.5,541.43 L349.0,539.69 L349.5,537.61 L350.0,535.25 L350.5,532.66 L351.0,529.95 L351.5,527.24 L352.0,524.64 L352.5,522.25 L353.0,520.17 L353.5,518.45 L354.0,517.12 L354.5,516.17 L355.0,515.56 L355.5,515.23 L356.0,515.11 L356.5,515.10 L357.0,515.13 L357.5,515.28 L358.0,515.65 L358.5,516.33 L359.0,517.36 L359.5,518.78 L360.0,520.58 L360.5,522.73 L361.0,525.16 L361.5,527.79 L362.0,530.50 L362.5,533.18 L363.0,535.72 L363.5,538.03 L364.0,540.04 L364.5,541.72 L365.0,543.05 L365.5,544.08 L366.0,544.83 L366.5,545.36 L367.0,545.71 L367.5,545.92 L368.0,546.00 L368.5,546.00 L369.0,546.00 L369.5,546.00 L370.0,546.00 L370.5,546.00 L371.0,546.00 L371.5,546.00 L372.0,546.00 L372.5,546.00 L373.0,546.00 L373.5,546.00 L374.0,546.00 L374.5,546.00 L375.0,546.00 L375.5,546.00 L376.0,546.00 L376.5,546.00 L377.0,546.00 L377.5,546.00 L378.0,546.00 L378.5,546.00 L379.0,546.00 L379.5,546.00 L380.0,546.00 L380.5,546.00 L381.0,546.00 L381.5,546.00 L382.0,546.00 L382.5,546.00 L383.0,546.00 L383.5,546.00 L384.0,546.00 L384.5,546.00 L385.0,546.00 L385.5,546.00 L386.0,546.00 L386.5,546.00 L387.0,546.00 L387.5,546.00 L388.0,546.00 L388.5,546.00 L389.0,546.00 L389.5,546.00 L390.0,546.00 L390.5,545.91 L391.0,545.76 L391.5,545.54 L392.0,545.21 L392.5,544.75 L393.0,544.13 L393.5,543.34 L394.0,542.35 L394.5,541.15 L395.0,539.76 L395.5,538.20 L396.0,536.51 L396.5,534.74 L397.0,532.97 L397.5,531.24 L398.0,529.63 L398.5,528.19 L399.0,526.96 L399.5,525.96 L400.0,525.21 L400.5,524.69 L401.0,524.37 L401.5,524.23 L402.0,524.20 L402.5,524.21 L403.0,524.29 L403.5,524.50 L404.0,524.89 L404.5,525.50 L405.0,526.34 L405.5,527.43 L406.0,528.74 L406.5,530.25 L407.0,531.91 L407.5,533.67 L408.0,535.45 L408.5,537.11 L409.0,538.58 L409.5,539.90 L410.0,541.10 L410.5,542.16 L411.0,543.03 L411.5,543.71 L412.0,544.21 L412.5,544.58 L413.0,544.83 L413.5,544.98 L414.0,545.07 L414.5,545.10 L415.0,545.09 L415.5,545.05 L416.0,544.99 L416.5,544.91 L417.0,544.81 L417.5,544.70 L418.0,544.59 L418.5,544.46 L419.0,544.33 L419.5,544.19 L420.0,544.05 L420.5,543.90 L421.0,543.75 L421.5,543.60 L422.0,543.44 L422.5,543.28 L423.0,543.13 L423.5,542.97 L424.0,542.82 L424.5,542.67 L425.0,542.52 L425.5,542.38 L426.0,542.25 L426.5,542.12 L427.0,542.00 L427.5,541.89 L428.0,541.78 L428.5,541.69 L429.0,541.61 L429.5,541.54 L430.0,541.48 L430.5,541.44 L431.0,541.41 L431.5,541.40 L432.0,541.41 L432.5,541.43 L433.0,541.46 L433.5,541.52 L434.0,541.58 L434.5,541.65 L435.0,541.74 L435.5,541.82 L436.0,541.92 L436.5,542.01 L437.0,542.09 L437.5,542.17 L438.0,542.24 L438.5,542.28 L439.0,542.30 L439.5,542.30 L440.0,542.30 L440.5,542.28 L441.0,542.23 L441.5,542.12 L442.0,541.95 L442.5,541.70 L443.0,541.35 L443.5,540.91 L444.0,540.35 L444.5,539.69 L445.0,538.93 L445.5,538.06 L446.0,537.11 L446.5,536.09 L447.0,535.00 L447.5,533.90 L448.0,532.85 L448.5,531.86 L449.0,530.96 L449.5,530.15 L450.0,529.46 L450.5,528.89 L451.0,528.43 L451.5,528.10 L452.0,527.88 L452.5,527.75 L453.0,527.70 L453.5,527.70 L454.0,527.73 L454.5,527.84 L455.0,528.03 L455.5,528.33 L456.0,528.74 L456.5,529.27 L457.0,529.92 L457.5,530.68 L458.0,531.54 L458.5,532.49 L459.0,533.51 L459.5,534.57 L460.0,535.65 L460.5,536.70 L461.0,537.69 L461.5,538.62 L462.0,539.47 L462.5,540.22 L463.0,540.87 L463.5,541.42 L464.0,541.87 L464.5,542.21 L465.0,542.47 L465.5,542.65 L466.0,542.75 L466.5,542.80 L467.0,542.80 L467.5,542.77 L468.0,542.72 L468.5,542.66 L469.0,542.60 L469.5,542.54 L470.0,542.50 L470.5,542.47 L471.0,542.44 L471.5,542.41 L472.0,542.38 L472.5,542.35 L473.0,542.31 L473.5,542.27 L474.0,542.21 L474.5,542.14 L475.0,542.05 L475.5,541.95 L476.0,541.82 L476.5,541.66 L477.0,541.48 L477.5,541.27 L478.0,541.02 L478.5,540.75 L479.0,540.44 L479.5,540.10 L480.0,539.73 L480.5,539.32 L481.0,538.88 L481.5,538.42 L482.0,537.94 L482.5,537.45 L483.0,536.96 L483.5,536.46 L484.0,535.97 L484.5,535.49 L485.0,535.02 L485.5,534.56 L486.0,534.13 L486.5,533.72 L487.0,533.33 L487.5,532.98 L488.0,532.66 L488.5,532.37 L489.0,532.12 L489.5,531.90 L490.0,531.73 L490.5,531.59 L491.0,531.48 L491.5,531.41 L492.0,531.37 L492.5,531.36 L493.0,531.37 L493.5,531.41 L494.0,531.45 L494.5,531.52 L495.0,531.62 L495.5,531.75 L496.0,531.91 L496.5,532.11 L497.0,532.34 L497.5,532.61 L498.0,532.92 L498.5,533.26 L499.0,533.64 L499.5,534.05 L500.0,534.49 L500.5,534.95 L501.0,535.44 L501.5,535.95 L502.0,536.47 L502.5,537.00 L503.0,537.54 L503.5,538.08 L504.0,538.62 L504.5,539.15 L505.0,539.65 L505.5,540.14 L506.0,540.60 L506.5,541.04 L507.0,541.45 L507.5,541.84 L508.0,542.19 L508.5,542.51 L509.0,542.81 L509.5,543.07 L510.0,543.31 L510.5,543.52 L511.0,543.70 L511.5,543.85 L512.0,543.98 L512.5,544.09 L513.0,544.18 L513.5,544.25 L514.0,544.31 L514.5,544.36 L515.0,544.40 L515.5,544.43 L516.0,544.46 L516.5,544.48 L517.0,544.51 L517.5,544.53 L518.0,544.54 L518.5,544.55 L519.0,544.54 L519.5,544.54 L520.0,544.52 L520.5,544.50 L521.0,544.48 L521.5,544.45 L522.0,544.42 L522.5,544.38 L523.0,544.33 L523.5,544.27 L524.0,544.20 L524.5,544.11 L525.0,543.99 L525.5,543.85 L526.0,543.68 L526.5,543.47 L527.0,543.20 L527.5,542.89 L528.0,542.55 L528.5,542.14 L529.0,541.67 L529.5,541.09 L530.0,540.39 L530.5,539.55 L531.0,538.52 L531.5,537.29 L532.0,535.82 L532.5,534.08 L533.0,532.06 L533.5,529.79 L534.0,527.26 L534.5,524.40 L535.0,521.18 L535.5,517.55 L536.0,513.49 L536.5,508.96 L537.0,504.04 L537.5,498.83 L538.0,493.24 L538.5,487.16 L539.0,480.49 L539.5,473.15 L540.0,465.13 L540.5,456.74 L541.0,448.09 L541.5,439.24 L542.0,430.27 L542.5,421.26 L543.0,412.30 L543.5,403.47 L544.0,394.88 L544.5,386.62 L545.0,378.78 L545.5,371.44 L546.0,364.68 L546.5,358.55 L547.0,353.01 L547.5,347.31 L548.0,341.59 L548.5,336.21 L549.0,331.51 L549.5,327.81 L550.0,325.43 L550.5,324.60 L551.0,324.92 L551.5,325.99 L552.0,327.87 L552.5,330.57 L553.0,334.07 L553.5,338.35 L554.0,343.34 L554.5,348.98 L555.0,355.20 L555.5,361.15 L556.0,366.34 L556.5,371.17 L557.0,376.04 L557.5,381.35 L558.0,387.48 L558.5,394.84 L559.0,403.70 L559.5,413.24 L560.0,423.07 L560.5,432.99 L561.0,442.81 L561.5,452.37 L562.0,461.48 L562.5,470.00 L563.0,477.99 L563.5,485.57 L564.0,492.63 L564.5,499.10 L565.0,504.88 L565.5,509.95 L566.0,514.47 L566.5,518.54 L567.0,522.15 L567.5,525.33 L568.0,528.12 L568.5,530.52 L569.0,532.57 L569.5,534.29 L570.0,535.66 L570.5,536.75 L571.0,537.59 L571.5,538.23 L572.0,538.73 L572.5,539.12 L573.0,539.46 L573.5,539.77 L574.0,540.10 L574.5,540.44 L575.0,540.80 L575.5,541.17 L576.0,541.54 L576.5,541.91 L577.0,542.26 L577.5,542.58 L578.0,542.88 L578.5,543.12 L579.0,543.30 L579.5,543.42 L580.0,543.49 L580.5,543.54 L581.0,543.56 L581.5,543.56 L582.0,543.53 L582.5,543.49 L583.0,543.41 L583.5,543.32 L584.0,543.20 L584.5,543.06 L585.0,542.90 L585.5,542.72 L586.0,542.53 L586.5,542.31 L587.0,542.07 L587.5,541.82 L588.0,541.55 L588.5,541.27 L589.0,540.97 L589.5,540.65 L590.0,540.33 L590.5,540.00 L591.0,539.66 L591.5,539.31 L592.0,538.96 L592.5,538.62 L593.0,538.27 L593.5,537.93 L594.0,537.60 L594.5,537.29 L595.0,537.00 L595.5,536.72 L596.0,536.47 L596.5,536.23 L597.0,536.03 L597.5,535.84 L598.0,535.68 L598.5,535.55 L599.0,535.44 L599.5,535.35 L600.0,535.29 L600.5,535.24 L601.0,535.21 L601.5,535.20 L602.0,535.20 L602.5,535.20 L603.0,535.21 L603.5,535.23 L604.0,535.26 L604.5,535.31 L605.0,535.38 L605.5,535.47 L606.0,535.58 L606.5,535.72 L607.0,535.88 L607.5,536.06 L608.0,536.27 L608.5,536.50 L609.0,536.75 L609.5,537.02 L610.0,537.32 L610.5,537.63 L611.0,537.94 L611.5,538.27 L612.0,538.60 L612.5,538.93 L613.0,539.26 L613.5,539.60 L614.0,539.93 L614.5,540.26 L615.0,540.59 L615.5,540.91 L616.0,541.23 L616.5,541.55 L617.0,541.86 L617.5,542.17 L618.0,542.49 L618.5,542.80 L619.0,543.10 L619.5,543.39 L620.0,543.67 L620.5,543.94 L621.0,544.19 L621.5,544.42 L622.0,544.63 L622.5,544.82 L623.0,544.98 L623.5,545.12 L624.0,545.23 L624.5,545.31 L625.0,545.38 L625.5,545.44 L626.0,545.48 L626.5,545.52 L627.0,545.56 L627.5,545.59 L628.0,545.61 L628.5,545.63 L629.0,545.65 L629.5,545.66 L630.0,545.67 L630.5,545.68 L631.0,545.68 L631.5,545.69 L632.0,545.69 L632.5,545.70 L633.0,545.70 L633.5,545.70 L634.0,545.70 L634.5,545.70 L635.0,545.70 L635.5,545.70 L636.0,545.70 L636.5,545.69 L637.0,545.69 L637.5,545.67 L638.0,545.66 L638.5,545.64 L639.0,545.62 L639.5,545.60 L640.0,545.58 L640.5,545.55 L641.0,545.53 L641.5,545.50 L642.0,545.47 L642.5,545.44 L643.0,545.41 L643.5,545.38 L644.0,545.35 L644.5,545.32 L645.0,545.29 L645.5,545.26 L646.0,545.23 L646.5,545.20 L647.0,545.17 L647.5,545.15 L648.0,545.12 L648.5,545.10 L649.0,545.08 L649.5,545.06 L650.0,545.04 L650.5,545.03 L651.0,545.02 L651.5,545.01 L652.0,545.00 L652.5,545.00 L653.0,545.00 L653.5,545.00 L654.0,545.00 L654.5,545.00 L655.0,545.00 L655.5,545.00 L656.0,545.00 L656.5,545.00 L657.0,545.00 L657.5,545.00 L658.0,545.00 L658.5,545.00 L659.0,545.00 L659.5,545.00 L660.0,545.00 L660.5,545.00 L661.0,545.00 L661.5,545.00 L662.0,545.00 L662.5,545.00 L663.0,545.00 L663.5,545.00 L664.0,545.00 L664.5,545.00 L665.0,545.00 L665.5,545.00 L666.0,545.00 L666.5,545.00 L667.0,545.00 L667.5,545.00 L668.0,545.00 L668.5,545.00 L669.0,545.00 L669.5,545.00 L670.0,545.00 L670.5,545.00 L671.0,545.00 L671.5,545.00 L672.0,545.00 L672.5,545.00 L673.0,545.00 L673.5,545.00 L674.0,545.00 L674.5,545.00 L675.0,545.00 L675.5,545.00 L676.0,545.00 L676.5,545.00 L677.0,545.00 L677.5,545.00 L678.0,545.00 L678.5,545.00 L679.0,545.00 L679.5,545.00 L680.0,545.00 L680.5,545.00 L681.0,545.01 L681.5,545.02 L682.0,545.03 L682.5,545.05 L683.0,545.07 L683.5,545.09 L684.0,545.11 L684.5,545.13 L685.0,545.16 L685.5,545.19 L686.0,545.22 L686.5,545.24 L687.0,545.27 L687.5,545.30 L688.0,545.33 L688.5,545.35 L689.0,545.38 L689.5,545.40 L690.0,545.43 L690.5,545.45 L691.0,545.46 L691.5,545.48 L692.0,545.49 L692.5,545.50 L693.0,545.50 L693.5,545.50 L694.0,545.50 L694.5,545.49 L695.0,545.49 L695.5,545.48 L696.0,545.47 L696.5,545.46 L697.0,545.44 L697.5,545.43 L698.0,545.41 L698.5,545.39 L699.0,545.37 L699.5,545.35 L700.0,545.33 L700.5,545.31 L701.0,545.28 L701.5,545.26 L702.0,545.23 L702.5,545.20 L703.0,545.17 L703.5,545.14 L704.0,545.11 L704.5,545.08 L705.0,545.04 L705.5,545.01 L706.0,544.98 L706.5,544.94 L707.0,544.91 L707.5,544.87 L708.0,544.84 L708.5,544.80 L709.0,544.77 L709.5,544.73 L710.0,544.69 L710.5,544.66 L711.0,544.62 L711.5,544.58 L712.0,544.55 L712.5,544.51 L713.0,544.47 L713.5,544.44 L714.0,544.40 L714.5,544.37 L715.0,544.33 L715.5,544.30 L716.0,544.27 L716.5,544.23 L717.0,544.20 L717.5,544.17 L718.0,544.14 L718.5,544.11 L719.0,544.08 L719.5,544.06 L720.0,544.03 L720.5,544.00 L721.0,543.98 L721.5,543.96 L722.0,543.94 L722.5,543.91 L723.0,543.89 L723.5,543.87 L724.0,543.85 L724.5,543.84 L725.0,543.82 L725.5,543.80 L726.0,543.78 L726.5,543.76 L727.0,543.75 L727.5,543.73 L728.0,543.71 L728.5,543.69 L729.0,543.68 L729.5,543.66 L730.0,543.64 L730.5,543.62 L731.0,543.60 L731.5,543.58 L732.0,543.56 L732.5,543.54 L733.0,543.52 L733.5,543.50 L734.0,543.48 L734.5,543.45 L735.0,543.43 L735.5,543.40 L736.0,543.38 L736.5,543.35 L737.0,543.32 L737.5,543.29 L738.0,543.26 L738.5,543.23 L739.0,543.19 L739.5,543.15 L740.0,543.10 L740.5,543.04 L741.0,542.97 L741.5,542.90 L742.0,542.81 L742.5,542.72 L743.0,542.63 L743.5,542.53 L744.0,542.43 L744.5,542.32 L745.0,542.21 L745.5,542.10 L746.0,541.99 L746.5,541.88 L747.0,541.77 L747.5,541.66 L748.0,541.55 L748.5,541.44 L749.0,541.34 L749.5,541.24 L750.0,541.15 L750.5,541.06 L751.0,540.97 L751.5,540.90 L752.0,540.83 L752.5,540.76 L753.0,540.71 L753.5,540.67 L754.0,540.63 L754.5,540.61 L755.0,540.60 L755.5,540.60 L756.0,540.61 L756.5,540.63 L757.0,540.66 L757.5,540.70 L758.0,540.74 L758.5,540.79 L759.0,540.84 L759.5,540.89 L760.0,540.95 L760.5,541.01 L761.0,541.08 L761.5,541.14 L762.0,541.20 L762.5,541.26 L763.0,541.32 L763.5,541.38 L764.0,541.43 L764.5,541.48 L765.0,541.52 L765.5,541.56 L766.0,541.59 L766.5,541.61 L767.0,541.63 L767.5,541.65 L768.0,541.66 L768.5,541.68 L769.0,541.70 L769.5,541.72 L770.0,541.73 L770.5,541.75 L771.0,541.77 L771.5,541.78 L772.0,541.80 L772.5,541.81 L773.0,541.82 L773.5,541.84 L774.0,541.85 L774.5,541.87 L775.0,541.88 L775.5,541.89 L776.0,541.90 L776.5,541.91 L777.0,541.92 L777.5,541.94 L778.0,541.95 L778.5,541.96 L779.0,541.97 L779.5,541.98 L780.0,541.99 L780.5,542.00 L781.0,542.00 L781.5,542.01 L782.0,542.02 L782.5,542.03 L783.0,542.04 L783.5,542.04 L784.0,542.05 L784.5,542.06 L785.0,542.07 L785.5,542.07 L786.0,542.08 L786.5,542.09 L787.0,542.09 L787.5,542.10 L788.0,542.10 L788.5,542.11 L789.0,542.11 L789.5,542.12 L790.0,542.12 L790.5,542.13 L791.0,542.13 L791.5,542.13 L792.0,542.14 L792.5,542.14 L793.0,542.14 L793.5,542.15 L794.0,542.15 L794.5,542.15 L795.0,542.16 L795.5,542.16 L796.0,542.16 L796.5,542.17 L797.0,542.17 L797.5,542.17 L798.0,542.18 L798.5,542.18 L799.0,542.19 L799.5,542.19 L800.0,542.20 L800.5,542.21 L801.0,542.22 L801.5,542.23 L802.0,542.24 L802.5,542.25 L803.0,542.27 L803.5,542.28 L804.0,542.29 L804.5,542.31 L805.0,542.32 L805.5,542.34 L806.0,542.35 L806.5,542.36 L807.0,542.37 L807.5,542.38 L808.0,542.39 L808.5,542.40 L809.0,542.40 L809.5,542.40 L810.0,542.38 L810.5,542.34 L811.0,542.27 L811.5,542.19 L812.0,542.10 L812.5,541.99 L813.0,541.86 L813.5,541.72 L814.0,541.58 L814.5,541.42 L815.0,541.26 L815.5,541.09 L816.0,540.91 L816.5,540.74 L817.0,540.56 L817.5,540.39 L818.0,540.21 L818.5,540.04 L819.0,539.88 L819.5,539.72 L820.0,539.57 L820.5,539.42 L821.0,539.25 L821.5,539.07 L822.0,538.89 L822.5,538.70 L823.0,538.50 L823.5,538.30 L824.0,538.09 L824.5,537.88 L825.0,537.67 L825.5,537.46 L826.0,537.25 L826.5,537.05 L827.0,536.85 L827.5,536.65 L828.0,536.46 L828.5,536.28 L829.0,536.11 L829.5,535.95 L830.0,535.80 L830.5,535.66 L831.0,535.54 L831.5,535.43 L832.0,535.34 L832.5,535.27 L833.0,535.22 L833.5,535.18 L834.0,535.15 L834.5,535.11 L835.0,535.08 L835.5,535.04 L836.0,535.01 L836.5,534.98 L837.0,534.95 L837.5,534.91 L838.0,534.88 L838.5,534.85 L839.0,534.82 L839.5,534.78 L840.0,534.75 L840.5,534.72 L841.0,534.68 L841.5,534.65 L842.0,534.61 L842.5,534.57 L843.0,534.54 L843.5,534.50 L844.0,534.46 L844.5,534.41 L845.0,534.37 L845.5,534.32 L846.0,534.28 L846.5,534.22 L847.0,534.17 L847.5,534.11 L848.0,534.05 L848.5,533.98 L849.0,533.91 L849.5,533.85 L850.0,533.81 L850.5,533.80 L851.0,533.81 L851.5,533.84 L852.0,533.88 L852.5,533.94 L853.0,534.01 L853.5,534.09 L854.0,534.18 L854.5,534.27 L855.0,534.36 L855.5,534.45 L856.0,534.54 L856.5,534.61 L857.0,534.68 L857.5,534.74 L858.0,534.78 L858.5,534.81 L859.0,534.81 L859.5,534.80 L860.0,534.75 L860.5,534.68 L861.0,534.62 L861.5,534.57 L862.0,534.53 L862.5,534.48 L863.0,534.42 L863.5,534.33 L864.0,534.21 L864.5,534.05 L865.0,533.84 L865.5,533.57 L866.0,533.23 L866.5,532.81 L867.0,532.35 L867.5,531.86 L868.0,531.34 L868.5,530.80 L869.0,530.23 L869.5,529.64 L870.0,529.03 L870.5,528.40 L871.0,527.74 L871.5,527.07 L872.0,526.39 L872.5,525.68 L873.0,524.97 L873.5,524.24 L874.0,523.50 L874.5,522.76 L875.0,522.01 L875.5,521.26 L876.0,520.50 L876.5,519.75 L877.0,519.00 L877.5,518.26 L878.0,517.52 L878.5,516.79 L879.0,516.07 L879.5,515.36 L880.0,514.66 L880.5,513.98 L881.0,513.32 L881.5,512.68 L882.0,512.05 L882.5,511.45 L883.0,510.87 L883.5,510.32 L884.0,509.80 L884.5,509.30 L885.0,508.83 L885.5,508.40 L886.0,508.00 L886.5,507.63 L887.0,507.30 L887.5,507.00 L888.0,506.75 L888.5,506.52 L889.0,506.34 L889.5,506.20 L890.0,506.09 L890.5,506.03 L891.0,506.00 L891.5,506.01 L892.0,506.06 L892.5,506.13 L893.0,506.24 L893.5,506.38 L894.0,506.55 L894.5,506.76 L895.0,506.99 L895.5,507.25 L896.0,507.55 L896.5,507.87 L897.0,508.22 L897.5,508.60 L898.0,509.00 L898.5,509.43 L899.0,509.88 L899.5,510.36 L900.0,510.86 L900.5,511.38 L901.0,511.92 L901.5,512.48 L902.0,513.05 L902.5,513.65 L903.0,514.25 L903.5,514.87 L904.0,515.50 L904.5,516.14 L905.0,516.77 L905.5,517.41 L906.0,518.05 L906.5,518.69 L907.0,519.33 L907.5,519.98 L908.0,520.62 L908.5,521.27 L909.0,521.92 L909.5,522.56 L910.0,523.21 L910.5,523.86 L911.0,524.51 L911.5,525.17 L912.0,525.82 L912.5,526.48 L913.0,527.13 L913.5,527.78 L914.0,528.43 L914.5,529.06 L915.0,529.69 L915.5,530.31 L916.0,530.91 L916.5,531.50 L917.0,532.09 L917.5,532.66 L918.0,533.21 L918.5,533.75 L919.0,534.28 L919.5,534.79 L920.0,535.29 L920.5,535.77 L921.0,536.24 L921.5,536.69 L922.0,537.13 L922.5,537.55 L923.0,537.95 L923.5,538.33 L924.0,538.70 L924.5,539.04 L925.0,539.37 L925.5,539.69 L926.0,539.99 L926.5,540.27 L927.0,540.54 L927.5,540.80 L928.0,541.04 L928.5,541.27 L929.0,541.50 L929.5,541.71 L930.0,541.91 L930.5,542.10 L931.0,542.29 L931.5,542.46 L932.0,542.64 L932.5,542.80 L933.0,542.96 L933.5,543.12 L934.0,543.27 L934.5,543.41 L935.0,543.55 L935.5,543.68 L936.0,543.80 L936.5,543.92 L937.0,544.04 L937.5,544.15 L938.0,544.25 L938.5,544.35 L939.0,544.45 L939.5,544.54 L940.0,544.62 L940.5,544.70 L941.0,544.78 L941.5,544.85 L942.0,544.92 L942.5,544.98 L943.0,545.04 L943.5,545.09 L944.0,545.14 L944.5,545.19 L945.0,545.23 L945.5,545.27 L946.0,545.30 L946.5,545.33 L947.0,545.36 L947.5,545.38 L948.0,545.41 L948.5,545.43 L949.0,545.45 L949.5,545.47 L950.0,545.48 L950.5,545.50 L951.0,545.51 L951.5,545.53 L952.0,545.54 L952.5,545.55 L953.0,545.56 L953.5,545.57 L954.0,545.58 L954.5,545.59 L955.0,545.60 L955.5,545.60 L956.0,545.61 L956.5,545.62 L957.0,545.62 L957.5,545.63 L958.0,545.63 L958.5,545.64 L959.0,545.64 L959.5,545.64 L960.0,545.65 L960.5,545.65 L961.0,545.65 L961.5,545.66 L962.0,545.66 L962.5,545.66 L963.0,545.67 L963.5,545.67 L964.0,545.67 L964.5,545.67 L965.0,545.68 L965.5,545.68 L966.0,545.68 L966.5,545.68 L967.0,545.69 L967.5,545.69 L968.0,545.69 L968.5,545.69 L969.0,545.69 L969.5,545.70 L970.0,545.70 L970.5,545.70 L971.0,545.71 L971.5,545.71 L972.0,545.71 L972.5,545.71 L973.0,545.72 L973.5,545.72 L974.0,545.72 L974.5,545.73 L975.0,545.73 L975.5,545.73 L976.0,545.73 L976.5,545.74 L977.0,545.74 L977.5,545.74 L978.0,545.75 L978.5,545.75 L979.0,545.75 L979.5,545.76 L980.0,545.76 L980.5,545.76 L981.0,545.77 L981.5,545.77 L982.0,545.77 L982.5,545.78 L983.0,545.78 L983.5,545.78 L984.0,545.79 L984.5,545.79 L985.0,545.80 L985.5,545.80 L986.0,545.80 L986.5,545.81 L987.0,545.81 L987.5,545.81 L988.0,545.82 L988.5,545.82 L989.0,545.82 L989.5,545.83 L990.0,545.83 L990.5,545.84 L991.0,545.84 L991.5,545.84 L992.0,545.85 L992.5,545.85 L993.0,545.85 L993.5,545.86 L994.0,545.86 L994.5,545.87 L995.0,545.87 L995.5,545.87 L996.0,545.88 L996.5,545.88 L997.0,545.88 L997.5,545.89 L998.0,545.89 L998.5,545.89 L999.0,545.90 L999.5,545.90 L1000.0,545.90 L1000.5,545.91 L1001.0,545.91 L1001.5,545.91 L1002.0,545.92 L1002.5,545.92 L1003.0,545.92 L1003.5,545.93 L1004.0,545.93 L1004.5,545.93 L1005.0,545.94 L1005.5,545.94 L1006.0,545.94 L1006.5,545.94 L1007.0,545.95 L1007.5,545.95 L1008.0,545.95 L1008.5,545.96 L1009.0,545.96 L1009.5,545.96 L1010.0,545.96 L1010.5,545.97 L1011.0,545.97 L1011.5,545.97 L1012.0,545.97 L1012.5,545.97 L1013.0,545.98 L1013.5,545.98 L1014.0,545.98 L1014.5,545.98 L1015.0,545.98 L1015.5,545.99 L1016.0,545.99 L1016.5,545.99 L1017.0,545.99 L1017.5,545.99 L1018.0,545.99 L1018.5,545.99 L1019.0,545.99 L1019.5,546.00 L1020.0,546.00 L1020.5,546.00 L1021.0,546.00 L1021.5,546.00 L1022.0,546.00 L1022.5,546.00 L1023.0,546.00 L1023.5,546.00 L1024.0,546.00" fill="none" stroke="#6a6a6a" stroke-width="0.9"/>
<line x1="318.1" y1="533.1" x2="318.1" y2="546" stroke="#ee3a62" stroke-width="1.3"/>
<line x1="356.4" y1="515.1" x2="356.4" y2="546" stroke="#ee3a62" stroke-width="1.3"/>
<line x1="402.2" y1="524.2" x2="402.2" y2="546" stroke="#ee3a62" stroke-width="1.3"/>
<line x1="453.3" y1="527.7" x2="453.3" y2="546" stroke="#ee3a62" stroke-width="1.3"/>
<line x1="493.4" y1="531.4" x2="493.4" y2="546" stroke="#ee3a62" stroke-width="1.3"/>
<line x1="550.5" y1="324.6" x2="550.5" y2="546" stroke="#ee3a62" stroke-width="1.3"/>
<line x1="601.9" y1="535.2" x2="601.9" y2="546" stroke="#ee3a62" stroke-width="1.3"/>
<line x1="891.2" y1="506" x2="891.2" y2="546" stroke="#ee3a62" stroke-width="1.3"/>
<line x1="280" y1="546" x2="1024.5" y2="546" stroke="#ff7878" stroke-width="1.4"/>
<line x1="313.6" y1="209.8" x2="313.6" y2="546" stroke="#ffcc00" stroke-width="2.2" stroke-dasharray="5.7 3.5"/>
<line x1="990.7" y1="209.8" x2="990.7" y2="546" stroke="#ffcc00" stroke-width="2.2" stroke-dasharray="5.7 3.5"/>
<line x1="280" y1="206.5" x2="280" y2="546.5" stroke="#78f078" stroke-width="1.8"/>
<line x1="1024.4" y1="206.5" x2="1024.4" y2="546.5" stroke="#78f078" stroke-width="1.8"/>
<text x="272" y="549.3" text-anchor="end" class="ax">0.0</text>
<text x="1032" y="549.3" class="ax">0.0</text>
<text x="272" y="511.2" text-anchor="end" class="ax">0.1</text>
<text x="1032" y="511.2" class="ax">0.1</text>
<text x="272" y="473.2" text-anchor="end" class="ax">0.2</text>
<text x="1032" y="473.2" class="ax">0.2</text>
<text x="272" y="435.1" text-anchor="end" class="ax">0.3</text>
<text x="1032" y="435.1" class="ax">0.3</text>
<text x="272" y="397.1" text-anchor="end" class="ax">0.4</text>
<text x="1032" y="397.1" class="ax">0.4</text>
<text x="272" y="359.0" text-anchor="end" class="ax">0.5</text>
<text x="1032" y="359.0" class="ax">0.5</text>
<text x="272" y="320.9" text-anchor="end" class="ax">0.6</text>
<text x="1032" y="320.9" class="ax">0.6</text>
<text x="272" y="282.9" text-anchor="end" class="ax">0.7</text>
<text x="1032" y="282.9" class="ax">0.7</text>
<text x="272" y="244.8" text-anchor="end" class="ax">0.8</text>
<text x="1032" y="244.8" class="ax">0.8</text>
<text x="313.5" y="556" text-anchor="middle" class="ax">0.0</text>
<text x="381.2" y="556" text-anchor="middle" class="ax">0.1</text>
<text x="449.0" y="556" text-anchor="middle" class="ax">0.2</text>
<text x="516.7" y="556" text-anchor="middle" class="ax">0.3</text>
<text x="584.4" y="556" text-anchor="middle" class="ax">0.4</text>
<text x="652.2" y="556" text-anchor="middle" class="ax">0.5</text>
<text x="719.9" y="556" text-anchor="middle" class="ax">0.6</text>
<text x="787.6" y="556" text-anchor="middle" class="ax">0.7</text>
<text x="855.3" y="556" text-anchor="middle" class="ax">0.8</text>
<text x="923.1" y="556" text-anchor="middle" class="ax">0.9</text>
<text x="990.8" y="556" text-anchor="middle" class="ax">1.0</text>
<text x="280" y="203.5" text-anchor="middle" class="ax">AU</text>
<text x="1024.4" y="203.5" text-anchor="middle" class="ax">AU</text>
<text x="276" y="556" class="ax" font-style="italic">R<tspan font-size="6">F</tspan></text>
<text x="550.8" y="323.5" text-anchor="middle" font-family="Liberation Sans" font-size="7.8" font-weight="bold" fill="#1a1a3a">Sinensetin</text>
<text x="318.1" y="533.4" text-anchor="middle" class="pl">1</text>
<text x="356.4" y="515.4" text-anchor="middle" class="pl">2</text>
<text x="402.2" y="524.5" text-anchor="middle" class="pl">3</text>
<text x="453.3" y="528.0" text-anchor="middle" class="pl">4</text>
<text x="493.4" y="531.7" text-anchor="middle" class="pl">5</text>
<text x="601.9" y="535.5" text-anchor="middle" class="pl">7</text>
<text x="891.2" y="506.3" text-anchor="middle" class="pl">8</text>
</svg>

<!-- splitter right -->
<svg class="a" style="left:1050px;top:330px" width="16" height="95" viewBox="0 0 16 95">
  <g fill="#a4a4a4"><circle cx="8.5" cy="9.4" r="1.25"/><circle cx="8.5" cy="16.2" r="1.25"/><circle cx="8.5" cy="23" r="1.25"/><circle cx="8.5" cy="70" r="1.25"/><circle cx="8.5" cy="77" r="1.25"/><circle cx="8.5" cy="84" r="1.25"/></g>
  <path d="M6.8 43.2 L10 46.2 L6.8 49.2 Z" fill="#111"/>
</svg>

<!-- ============ SIDEBAR ============ -->
<!-- toolbar -->
<div class="a" style="left:1159px;top:193px;width:27.5px;height:47px;background:#0b73c6"></div>
<div class="a" style="left:1219px;top:193px;width:10.7px;height:47px;background:#dcdcdc"></div>
<svg class="a" style="left:1060px;top:192px" width="175" height="48" viewBox="0 0 175 48">
  <!-- manual mode -->
  <path d="M9.5 16.8 H19.5" stroke="#2a6db5" stroke-width="1"/>
  <path d="M10.5 16.8 Q12 16.5 12.5 12.5 Q13 16.5 14 16.5 Q15 16 15.7 7.8 Q16.4 16 17 16.5 Q18 16.5 18.8 11.5 Q19.3 16.5 20 16.8 Z" fill="#2a6db5"/>
  <path d="M19.5 13 Q20.2 11.6 21 13 V14.6 Q22.4 13.8 23.2 15 Q24.6 14.6 25 16.5 V19.5 Q24 22.8 21.5 22.8 Q19 22.6 18.4 19.8 L17.8 16.8 Q18.6 16.2 19.5 17.3 Z" fill="#777"/>
  <path d="M31 26.3 L33.4 29.8 L35.8 26.3 Z" fill="#555"/>
  <!-- zoom -->
  <circle cx="49.2" cy="13.4" r="5.3" fill="#fff" stroke="#2a6db5" stroke-width="1.7"/>
  <path d="M46.3 13.4 H52.1 M49.2 10.5 V16.3" stroke="#2f9e52" stroke-width="1.7"/>
  <path d="M53 17.4 L57.3 21.7" stroke="#2a6db5" stroke-width="2.2"/>
  <path d="M63.7 26.3 L66.1 29.8 L68.5 26.3 Z" fill="#555"/>
  <!-- unit -->
  <path d="M77.5 6 L93.5 22" stroke="#4a9ee0" stroke-width="1"/>
  <text x="83.5" y="10.5" font-family="Liberation Sans" font-size="5.2" fill="#3a90d8">mm</text>
  <text x="78" y="19" font-family="Liberation Sans" font-size="6.5" font-style="italic" fill="#3a90d8">R</text>
  <text x="82.2" y="20" font-family="Liberation Sans" font-size="4.5" font-style="italic" fill="#3a90d8">F</text>
  <!-- collapse -->
  <path d="M106.2 7 V21 M119.3 7 V21" stroke="#fff" stroke-width="1.6"/>
  <path d="M111.3 13.6 L107.8 11.3 V15.9 Z M114.2 13.6 L117.7 11.3 V15.9 Z" fill="#fff"/>
  <path d="M106.5 13.6 H108.5 M117 13.6 H119" stroke="#fff" stroke-width="0.8"/>
  <!-- export -->
  <path d="M130 5.6 H138.5 L142.8 9.9 V21 H130 Z" fill="#fff" stroke="#777" stroke-width="0.8"/>
  <path d="M138.5 5.6 V9.9 H142.8" fill="none" stroke="#999" stroke-width="0.6"/>
  <path d="M136 18.2 H145 M142.3 15.5 L145.2 18.2 L142.3 20.9" stroke="#2a6db5" stroke-width="1.3" fill="none"/>
  <path d="M151.6 26.3 L154 29.8 L156.4 26.3 Z" fill="#555"/>
  <path d="M162.4 22.5 L164.6 25.6 L166.8 22.5 Z" fill="#bbb"/>
</svg>
<div class="a tb" style="left:1057px;top:216.3px;width:40px">Manual<br>mode</div>
<div class="a tb" style="left:1090px;top:216.3px;width:40px">Zoom</div>
<div class="a tb" style="left:1125.5px;top:216.3px;width:40px">Unit</div>
<div class="a tb" style="left:1153px;top:216.3px;width:40px;color:#fff">Collapse</div>
<div class="a tb" style="left:1177.5px;top:216.3px;width:40px">Export</div>

<div class="a" style="left:1065.7px;top:251.2px"><svg style="display:block" width="13.7" height="13.7" viewBox="0 0 13 13"><rect width="13" height="13" fill="#0b73c6"/><path d="M3.2 6.8 L5.4 9 L9.8 4.6" stroke="#fff" stroke-width="1.4" fill="none"/></svg></div>
<div class="a t95" style="left:1083px;top:251.7px;line-height:12px">Bounds</div>
<div class="a" style="left:1065.7px;top:271.5px"><svg style="display:block" width="13.7" height="13.7" viewBox="0 0 13 13"><rect width="13" height="13" fill="#0b73c6"/><path d="M3.2 6.8 L5.4 9 L9.8 4.6" stroke="#fff" stroke-width="1.4" fill="none"/></svg></div>
<div class="a t95" style="left:1083px;top:272px;line-height:12px">Smoothing</div>

<!-- Baseline box -->
<div class="a" style="left:1065.8px;top:289px;width:204.2px;height:53.7px;background:#dadada"></div>
<div class="a" style="left:1073.6px;top:314.8px;width:195.4px;height:27.2px;background:#fafafa"></div>
<div class="a" style="left:1072px;top:294.3px"><svg style="display:block" width="13.7" height="13.7" viewBox="0 0 13 13"><rect width="13" height="13" fill="#0b73c6"/><path d="M3.2 6.8 L5.4 9 L9.8 4.6" stroke="#fff" stroke-width="1.4" fill="none"/></svg></div>
<div class="a t95" style="left:1088.7px;top:295px;line-height:12px">Baseline</div>
<svg class="a" style="left:1128px;top:291.5px" width="18" height="18" viewBox="0 0 18 18"><rect x="0.5" y="0.5" width="17" height="17" fill="#fff" stroke="#7fb3e0"/><path d="M3.5 13.5 V9 M6 13.5 V4.5 M8.5 13.5 V7 M11 13.5 V10 M3 13.5 H14" stroke="#2a6db5" stroke-width="1.3"/><path d="M8.5 13.5 Q11 9 14 13.5 Z" fill="#2a6db5"/></svg>
<svg class="a" style="left:1251.5px;top:296.5px" width="10" height="7" viewBox="0 0 10 7"><path d="M1 5.5 L5 1.5 L9 5.5" fill="none" stroke="#555" stroke-width="1.1"/></svg>
<div class="a" style="left:1086px;top:321px;font-size:9.5px;line-height:12px;font-weight:bold;color:#222">LS</div>
<div class="a" style="left:1100px;top:321px;font-size:9.5px;line-height:12px;color:#aaa">/ Interactive</div>
<svg class="a" style="left:1250px;top:323px" width="10" height="7" viewBox="0 0 10 7"><path d="M1 5.5 L5 1.5 L9 5.5" fill="none" stroke="#555" stroke-width="1.1"/></svg>

<!-- Peaks box -->
<div class="a" style="left:1065.8px;top:350px;width:204.2px;height:138.4px;background:#dadada"></div>
<div class="a" style="left:1073.6px;top:398px;width:195.4px;height:90.4px;background:#fafafa"></div>
<div class="a" style="left:1065.8px;top:488px;width:204.2px;height:1px;background:#d6d6d6"></div>
<div class="a" style="left:1072px;top:355px"><svg style="display:block" width="13.7" height="13.7" viewBox="0 0 13 13"><rect width="13" height="13" fill="#0b73c6"/><path d="M3.2 6.8 L5.4 9 L9.8 4.6" stroke="#fff" stroke-width="1.4" fill="none"/></svg></div>
<div class="a t95" style="left:1088.7px;top:355.5px;line-height:12px">Peaks</div>
<svg class="a" style="left:1117.5px;top:353.5px" width="61" height="17" viewBox="0 0 61 17">
  <rect x="0.5" y="0.5" width="17.5" height="16" fill="#fff" stroke="#7fb3e0"/>
  <rect x="21.5" y="0.5" width="17.5" height="16" fill="#fff" stroke="#7fb3e0"/>
  <rect x="42" y="0.5" width="18" height="16" fill="#fff" stroke="#7fb3e0"/>
  <path d="M4.5 13 Q6.5 12 7 4 Q7.5 12 8.5 13 Z" fill="#2a6db5"/>
  <circle cx="11.5" cy="11.5" r="3" fill="#3aa060"/><path d="M10 11.5 H13 M11.5 10 V13" stroke="#fff" stroke-width="0.9"/>
  <path d="M25.5 13 Q27.5 12 28 4 Q28.5 12 29.5 13 Z" fill="#2a6db5"/>
  <circle cx="32.5" cy="11.5" r="3" fill="#e0402a"/><path d="M31 11.5 H34" stroke="#fff" stroke-width="0.9"/>
  <path d="M46 13 Q48 12 48.5 4 Q49 12 50 13 Z M49.5 13 Q51 12 51.3 6 Q51.7 12 53 13 Z" fill="#2a6db5"/>
  <path d="M51 9.5 L55 13.5 M55 9.5 L51 13.5" stroke="#e0402a" stroke-width="1.3"/>
</svg>
<svg class="a" style="left:1251.5px;top:358px" width="10" height="7" viewBox="0 0 10 7"><path d="M1 5.5 L5 1.5 L9 5.5" fill="none" stroke="#555" stroke-width="1.1"/></svg>
<div class="a t95" style="left:1073.5px;top:379px;line-height:12px">Resolution</div>
<div class="a t95" style="left:1124.5px;top:379px;line-height:12px">None</div>
<div class="a" style="left:1232.5px;top:382.5px;width:0;height:0;border-left:3px solid transparent;border-right:3px solid transparent;border-top:4px solid #555"></div>
<div class="a" style="left:1124px;top:393.3px;width:122px;height:1px;background:#c4c4c4"></div>
<svg class="a" style="left:1251px;top:376px" width="18.5" height="19" viewBox="0 0 18.5 19"><rect x="0.5" y="0.5" width="17.5" height="18" fill="#fff" stroke="#7fb3e0"/><path d="M4 9.5 Q9.25 4 14.5 9.5 Q9.25 15 4 9.5 Z" fill="#f0c080" stroke="#d89a40" stroke-width="0.6"/><circle cx="9.25" cy="9.5" r="2.2" fill="#2a5aa0"/></svg>

<div class="a" style="left:1093px;top:404px;font-size:9px;line-height:12px;color:#9a9a9a">OQI</div>
<div class="a" style="left:1112.5px;top:404px;font-size:9.5px;line-height:12px;color:#555">/</div>
<div class="a" style="left:1119.5px;top:404px;font-size:9px;line-height:12px;font-weight:bold;color:#222">Gauss (legacy)</div>
<div class="a" style="left:1189px;top:404px;font-size:9.5px;line-height:12px;color:#9a9a9a">/ Gauss</div>
<svg class="a" style="left:1250.5px;top:407px" width="10" height="7" viewBox="0 0 10 7"><path d="M1 5.5 L5 1.5 L9 5.5" fill="none" stroke="#555" stroke-width="1.1"/></svg>

<div class="a t95" style="left:1077.8px;top:429px;line-height:12px">Separation</div>
<div class="a t95" style="left:1077.8px;top:449.5px;line-height:12px">Sensitivity</div>
<div class="a t95" style="left:1077.8px;top:470.3px;line-height:12px">Threshold</div>
<svg class="a" style="left:1125px;top:424px" width="145" height="62" viewBox="0 0 145 62">
  <g stroke="#e2e2e2" stroke-width="1"><line x1="4" y1="10.2" x2="96.7" y2="10.2"/><line x1="4" y1="30.5" x2="96.7" y2="30.5"/><line x1="4" y1="51.4" x2="96.7" y2="51.4"/></g>
  <g fill="#555">
    <circle cx="9.5" cy="14.5" r="0.5"/><circle cx="18" cy="14.5" r="0.5"/><circle cx="34" cy="14.5" r="0.5"/><circle cx="43" cy="14.5" r="0.5"/><circle cx="52" cy="14.5" r="0.5"/><circle cx="61" cy="14.5" r="0.5"/><circle cx="69.5" cy="14.5" r="0.5"/><circle cx="78" cy="14.5" r="0.5"/><circle cx="87" cy="14.5" r="0.5"/><circle cx="95" cy="14.5" r="0.5"/>
    <circle cx="9.5" cy="55.2" r="0.5"/><circle cx="17" cy="55.2" r="0.5"/><circle cx="35" cy="55.2" r="0.5"/><circle cx="45" cy="55.2" r="0.5"/><circle cx="55" cy="55.2" r="0.5"/><circle cx="65" cy="55.2" r="0.5"/><circle cx="75" cy="55.2" r="0.5"/><circle cx="85" cy="55.2" r="0.5"/><circle cx="95" cy="55.2" r="0.5"/>
  </g>
  <path d="M10 34.5 H96" stroke="#666" stroke-width="0.8" stroke-dasharray="0.8 3.5"/>
  <g fill="#0b73c6"><circle cx="23.7" cy="10.2" r="4"/><circle cx="8.2" cy="30.3" r="4"/><circle cx="25" cy="51.6" r="4"/></g>
  <g stroke="#e6e6e6" stroke-width="1"><line x1="97" y1="20.6" x2="142" y2="20.6"/><line x1="97" y1="41.3" x2="142" y2="41.3"/><line x1="97" y1="62" x2="142" y2="62"/></g>
  <g fill="#222"><path d="M135 8 L137.4 5 L139.8 8 Z M135 11 L137.4 14 L139.8 11 Z"/><path d="M135 28.8 L137.4 25.8 L139.8 28.8 Z M135 31.8 L137.4 34.8 L139.8 31.8 Z"/><path d="M135 49.6 L137.4 46.6 L139.8 49.6 Z M135 52.6 L137.4 55.6 L139.8 52.6 Z"/></g>
</svg>
<div class="a t95" style="left:1230px;top:429px;line-height:12px">1.00</div>
<div class="a t95" style="left:1230px;top:449.5px;line-height:12px">0.10</div>
<div class="a t95" style="left:1230px;top:470.3px;line-height:12px">0.10</div>

<!-- B label and arrow -->
<div class="a" style="left:1188.7px;top:334.8px;font-size:36px;font-weight:bold;color:#ff0000;line-height:50px">B</div>
<svg class="a" style="left:1095px;top:310px" width="35" height="42" viewBox="0 0 35 42"><path d="M4.2 6.4 L9.1 2.9 L20.5 20 L26.3 16.6 L28.9 39 L9.1 27.6 L13.9 24 Z" fill="#ff0000"/></svg>

</body></html>
